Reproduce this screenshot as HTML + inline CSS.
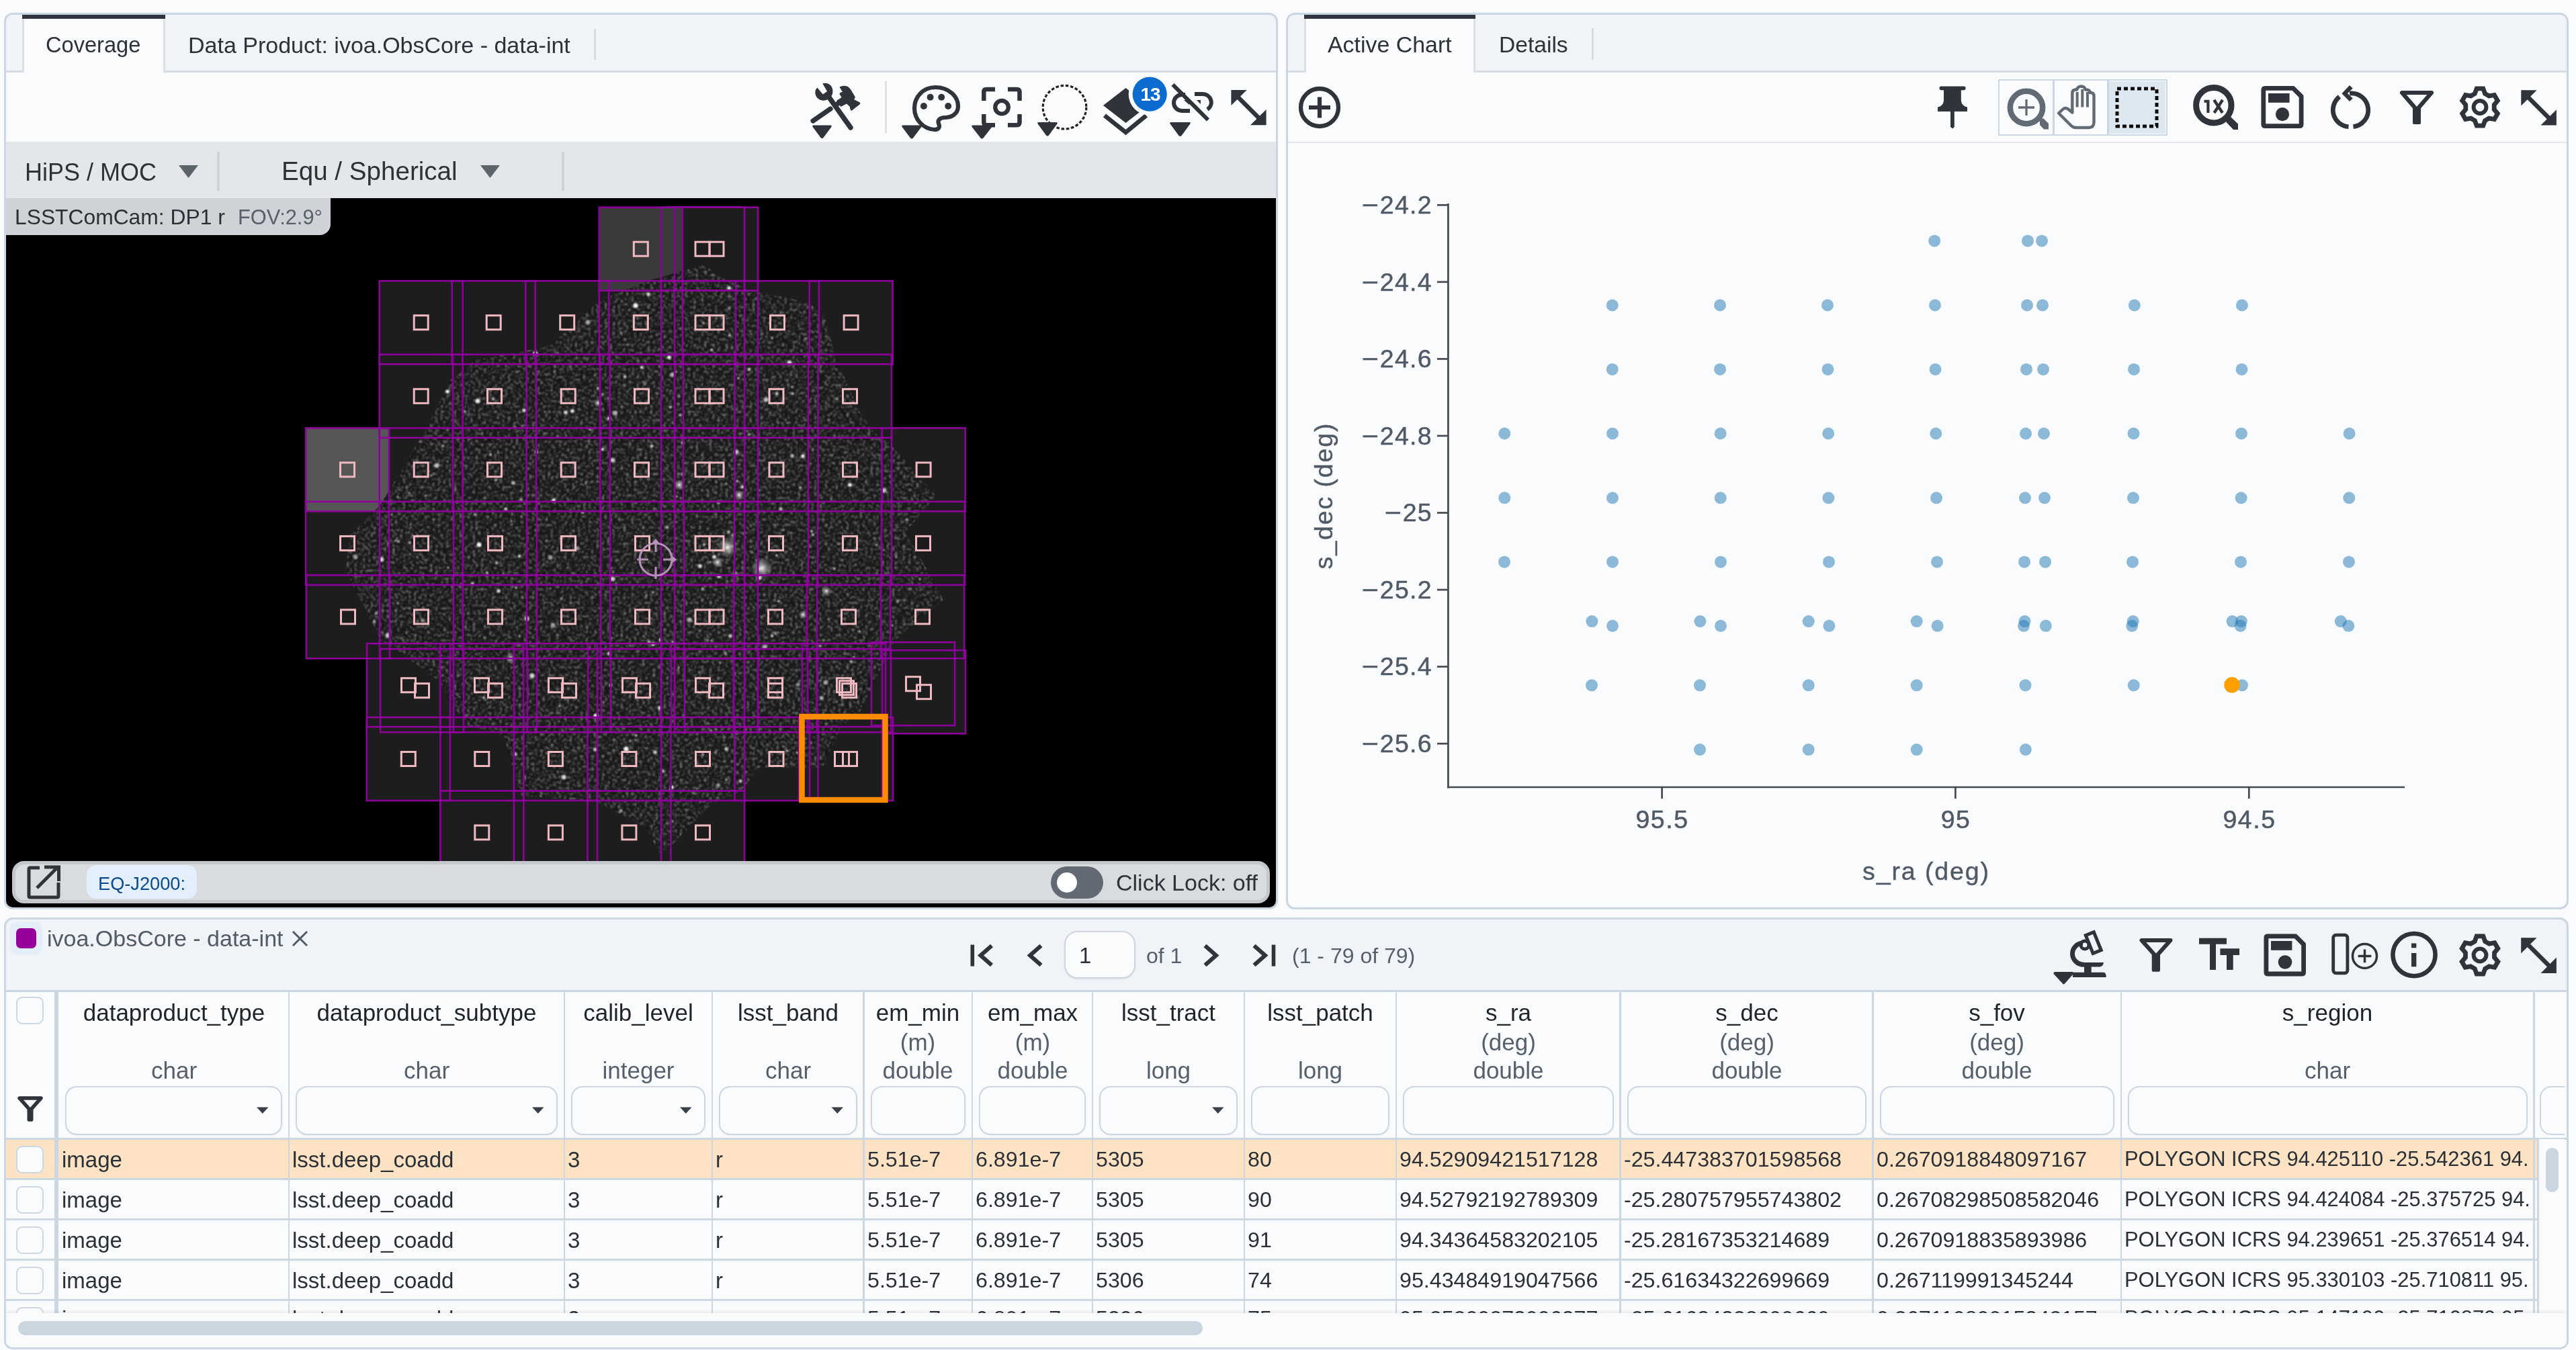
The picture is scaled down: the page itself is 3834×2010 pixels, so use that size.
<!DOCTYPE html>
<html><head><meta charset="utf-8"><style>
html,body{margin:0;padding:0;}
body{width:3834px;height:2010px;position:relative;overflow:hidden;background:#fafbfd;font-family:"Liberation Sans",sans-serif;color:#2d3238;}
.a{position:absolute;box-sizing:border-box;}
.t{position:absolute;white-space:nowrap;line-height:1;will-change:transform;}
.clip{position:absolute;overflow:hidden;}
svg{position:absolute;overflow:visible;}
</style></head><body>
<div class="a" style="left:6px;top:19px;width:1896px;height:1335px;border:3px solid #cbd6e0;border-radius:13px;background:#fafbfd;overflow:hidden;"><div class="a" style="left:0px;top:0px;width:1890px;height:83px;background:#f0f3f7;"></div><div class="a" style="left:0px;top:83px;width:1890px;height:3px;background:#d6dde4;"></div><div class="a" style="left:24px;top:0px;width:213px;height:86px;background:#fafbfd;border-left:3px solid #dcdfe3;border-right:3px solid #dcdfe3;"></div><div class="a" style="left:24px;top:0px;width:213px;height:6px;background:#30353d;"></div><div class="a" style="left:875px;top:21px;width:3px;height:46px;background:#d5dbe1;"></div><div class="a" style="left:0px;top:86px;width:1890px;height:103px;background:#fafbfd;"></div><div class="a" style="left:0px;top:189px;width:1890px;height:85px;background:#e3e6ea;"></div><div class="a" style="left:314px;top:204px;width:4px;height:58px;background:#cfd3d8;"></div><div class="a" style="left:827px;top:204px;width:4px;height:58px;background:#cfd3d8;"></div><div class="a" style="left:1308px;top:99px;width:3px;height:77px;background:#dfe3e7;"></div><div class="a" style="left:0px;top:273px;width:1890px;height:1065px;background:#000;"></div></div><div class="t" style="left:68.0px;top:50.9px;font-size:32.6px;color:#2d3238;">Coverage</div><div class="t" style="left:280.0px;top:49.7px;font-size:34.0px;color:#2d3238;">Data Product: ivoa.ObsCore - data-int</div><div class="t" style="left:37.0px;top:238.5px;font-size:36px;color:#2d3238;">HiPS / MOC</div><div class="t" style="left:419.0px;top:236.3px;font-size:38.6px;color:#2d3238;">Equ / Spherical</div><svg style="left:0;top:0" width="1" height="1"><path d="M266 246 L295 246 L280.5 265 Z" fill="#5b636b"/><path d="M715 246 L744 246 L729.5 265 Z" fill="#5b636b"/></svg><svg style="left:0;top:0" width="3834" height="300" viewBox="0 0 3834 300"><defs><filter id="blL"><feGaussianBlur stdDeviation="0.45"/></filter></defs><g fill="#2f343b" stroke="none"><line x1="1210" y1="180" x2="1236" y2="162" stroke="#2f343b" stroke-width="7.2" stroke-linecap="round"/><line x1="1243" y1="157" x2="1252" y2="151" stroke="#2f343b" stroke-width="7.2"/><path d="M1249.5 129.4 Q1255 126.5 1261 128.5 Q1264 130 1266 133 L1272.3 143.5 Q1273.5 146 1271 148 L1279.8 152.5 Q1281 154 1279.5 155.5 L1268 164.5 Q1266.5 165 1265.8 163.5 L1264.5 158.5 L1260 154.5 L1251.5 159 L1245 150 L1252.5 145 L1249.5 140 Q1250.5 136.5 1254 137 Z"/><path d="M1216.4 130.5 L1224.8 140.6 L1231 136 L1224.3 124.3 Q1232 122.5 1237 128 Q1241 134 1238.5 141 L1237.5 143 L1232 148 Q1226 151 1220 148.5 Q1212 144 1213.5 135 Q1214.5 132 1216.4 130.5 Z"/><line x1="1234" y1="145" x2="1266" y2="190" stroke="#2f343b" stroke-width="7.4" stroke-linecap="round"/></g><path d="M1211 186.5 L1236 186.5 Q1239 186.5 1237 189.5 L1225.5 205 Q1223.5 207 1221.5 205 L1210 189.5 Q1208 186.5 1211 186.5 Z" fill="#2f343b"/><path d="M1392 130 C1413 130 1426 144 1426 158 C1426 170 1416 175 1406 175 C1399 175 1395 179 1397 184 C1400 190 1396 193 1391 193 C1374 192 1361 178 1361 161 C1361 144 1374 130 1392 130 Z" fill="none" stroke="#2f343b" stroke-width="6.2" stroke-linejoin="round"/><circle cx="1384.6" cy="144.8" r="5" fill="#2f343b"/><circle cx="1401.2" cy="144.8" r="5" fill="#2f343b"/><circle cx="1374.9" cy="158" r="5" fill="#2f343b"/><circle cx="1411.2" cy="158" r="5" fill="#2f343b"/><path d="M1344 186.5 L1370 186.5 Q1373 186.5 1371 189.5 L1359.0 205.5 Q1357.0 207.5 1355.0 205.5 L1343 189.5 Q1341 186.5 1344 186.5 Z" fill="#2f343b"/><path d="M1481 133 L1468 133 Q1464.3 133 1464.3 137 L1464.3 150 M1500 133 L1513 133 Q1517.5 133 1517.5 137 L1517.5 150 M1517.5 170 L1517.5 182 Q1517.5 186.2 1513 186.2 L1500 186.2 M1481 186.2 L1468 186.2 Q1464.3 186.2 1464.3 182 L1464.3 170" fill="none" stroke="#2f343b" stroke-width="6.5"/><circle cx="1491" cy="159.7" r="9.8" fill="none" stroke="#2f343b" stroke-width="6.2"/><path d="M1448 186.5 L1475 186.5 Q1478 186.5 1476 189.5 L1463.5 205.5 Q1461.5 207.5 1459.5 205.5 L1447 189.5 Q1445 186.5 1448 186.5 Z" fill="#2f343b"/><circle cx="1584.5" cy="159.7" r="32.3" fill="none" stroke="#222" stroke-width="3.2" stroke-dasharray="4.5 2.8" filter="url(#blL)"/><path d="M1546 182 L1572 182 Q1575 182 1573 185 L1561.0 201.5 Q1559.0 203.5 1557.0 201.5 L1545 185 Q1543 182 1546 182 Z" fill="#2f343b"/><path d="M1642 157 L1675.5 131 L1709 157 L1675.5 183 Z" fill="#2f343b"/><path d="M1644 172 L1675.5 197 L1706 172" fill="none" stroke="#2f343b" stroke-width="6.5"/><circle cx="1711.2" cy="140.2" r="31.5" fill="#fafbfd"/><circle cx="1711.2" cy="140.2" r="25.6" fill="#0b6bcf"/><path d="M1771 165 L1759 165 A12 12 0 0 1 1759 141 L1764 141" fill="none" stroke="#2f343b" stroke-width="6"/><path d="M1778 140 L1790 140 A12.5 12.5 0 0 1 1797 163" fill="none" stroke="#2f343b" stroke-width="6"/><line x1="1745.5" y1="126" x2="1798" y2="178.5" stroke="#2f343b" stroke-width="6"/><path d="M1762 149 L1770 149 L1770 156 Z M1781 149 L1787 149 L1787 155 Z" fill="#2f343b"/><path d="M1743 182 L1770 182 Q1773 182 1771 185 L1758.5 202 Q1756.5 204 1754.5 202 L1742 185 Q1740 182 1743 182 Z" fill="#2f343b"/><line x1="1840" y1="142" x2="1877" y2="179" stroke="#2f343b" stroke-width="6.5"/><path d="M1832.4 134 L1855.7 134 L1832.4 157 Z M1884.6 186.3 L1861 186.3 L1884.6 163 Z" fill="#2f343b"/></svg><div class="t" style="left:-288.5px;width:4000px;text-align:center;top:126.8px;font-size:28px;color:#fff;font-weight:bold;letter-spacing:-1px;">13</div><div class="clip" style="left:9px;top:295px;width:1890px;height:1055px;border-radius:0 0 10px 10px;"><svg style="left:-9px;top:-295px" width="3834" height="2010" viewBox="0 0 3834 2010"><defs><clipPath id="blobclip"><polygon points="1049,394 1071,412 1116,432 1203,450 1228,473 1243,529 1256,560 1281,616 1305,648 1324,660 1349,688 1393,738 1368,769 1347,792 1378,845 1404,893 1331,955 1280,1060 1252,1082 1224,1144 1130,1143 1102,1179 1059,1197 984,1275 962,1233 888,1193 774,1185 750,1095 693,1079 652,1013 587,965 566,953 536,893 514,849 521,797 566,752 588,715 633,640 670,566 707,536 789,521 819,514 893,447 968,417"/></clipPath><filter id="nz" x="0" y="0" width="100%" height="100%"><feTurbulence type="fractalNoise" baseFrequency="0.25" numOctaves="2" seed="4" result="t"/><feColorMatrix in="t" type="matrix" values="0 0 0 0 1  0 0 0 0 1  0 0 0 0 1  0 0 0 2.6 -1.25" result="c"/><feGaussianBlur in="c" stdDeviation="1.0"/></filter><filter id="bl"><feGaussianBlur stdDeviation="1.2"/></filter><radialGradient id="glow"><stop offset="0" stop-color="#fff" stop-opacity="0.95"/><stop offset="0.35" stop-color="#ddd" stop-opacity="0.55"/><stop offset="1" stop-color="#999" stop-opacity="0"/></radialGradient><filter id="bl2"><feGaussianBlur stdDeviation="0.6"/></filter></defs><rect x="891.8" y="308.7" width="124" height="124" fill="#1d1d1d"/><rect x="984.0" y="308.7" width="124" height="124" fill="#1d1d1d"/><rect x="1004.0" y="308.7" width="124" height="124" fill="#1d1d1d"/><rect x="564.7" y="418.2" width="124" height="124" fill="#1d1d1d"/><rect x="672.7" y="418.2" width="124" height="124" fill="#1d1d1d"/><rect x="782.2" y="418.2" width="124" height="124" fill="#1d1d1d"/><rect x="891.8" y="418.2" width="124" height="124" fill="#1d1d1d"/><rect x="984.0" y="418.2" width="124" height="124" fill="#1d1d1d"/><rect x="1004.0" y="418.2" width="124" height="124" fill="#1d1d1d"/><rect x="1095.0" y="418.2" width="124" height="124" fill="#1d1d1d"/><rect x="1204.6" y="418.2" width="124" height="124" fill="#1d1d1d"/><rect x="564.7" y="527.8" width="124" height="124" fill="#1d1d1d"/><rect x="674.0" y="527.8" width="124" height="124" fill="#1d1d1d"/><rect x="783.7" y="527.8" width="124" height="124" fill="#1d1d1d"/><rect x="893.0" y="527.8" width="124" height="124" fill="#1d1d1d"/><rect x="984.0" y="527.8" width="124" height="124" fill="#1d1d1d"/><rect x="1004.0" y="527.8" width="124" height="124" fill="#1d1d1d"/><rect x="1093.5" y="527.8" width="124" height="124" fill="#1d1d1d"/><rect x="1203.0" y="527.8" width="124" height="124" fill="#1d1d1d"/><rect x="455.0" y="637.3" width="124" height="124" fill="#1d1d1d"/><rect x="564.7" y="637.3" width="124" height="124" fill="#1d1d1d"/><rect x="674.0" y="637.3" width="124" height="124" fill="#1d1d1d"/><rect x="783.7" y="637.3" width="124" height="124" fill="#1d1d1d"/><rect x="893.0" y="637.3" width="124" height="124" fill="#1d1d1d"/><rect x="984.0" y="637.3" width="124" height="124" fill="#1d1d1d"/><rect x="1004.0" y="637.3" width="124" height="124" fill="#1d1d1d"/><rect x="1093.5" y="637.3" width="124" height="124" fill="#1d1d1d"/><rect x="1203.0" y="637.3" width="124" height="124" fill="#1d1d1d"/><rect x="1312.6" y="637.3" width="124" height="124" fill="#1d1d1d"/><rect x="455.0" y="746.9" width="124" height="124" fill="#1d1d1d"/><rect x="565.0" y="746.9" width="124" height="124" fill="#1d1d1d"/><rect x="675.0" y="746.9" width="124" height="124" fill="#1d1d1d"/><rect x="784.0" y="746.9" width="124" height="124" fill="#1d1d1d"/><rect x="894.0" y="746.9" width="124" height="124" fill="#1d1d1d"/><rect x="984.0" y="746.9" width="124" height="124" fill="#1d1d1d"/><rect x="1004.0" y="746.9" width="124" height="124" fill="#1d1d1d"/><rect x="1093.0" y="746.9" width="124" height="124" fill="#1d1d1d"/><rect x="1203.0" y="746.9" width="124" height="124" fill="#1d1d1d"/><rect x="1312.0" y="746.9" width="124" height="124" fill="#1d1d1d"/><rect x="456.0" y="856.4" width="124" height="124" fill="#1d1d1d"/><rect x="565.0" y="856.4" width="124" height="124" fill="#1d1d1d"/><rect x="675.0" y="856.4" width="124" height="124" fill="#1d1d1d"/><rect x="784.0" y="856.4" width="124" height="124" fill="#1d1d1d"/><rect x="894.0" y="856.4" width="124" height="124" fill="#1d1d1d"/><rect x="984.0" y="856.4" width="124" height="124" fill="#1d1d1d"/><rect x="1004.0" y="856.4" width="124" height="124" fill="#1d1d1d"/><rect x="1092.0" y="856.4" width="124" height="124" fill="#1d1d1d"/><rect x="1201.0" y="856.4" width="124" height="124" fill="#1d1d1d"/><rect x="1311.0" y="856.4" width="124" height="124" fill="#1d1d1d"/><rect x="546.0" y="958.2" width="124" height="124" fill="#1d1d1d"/><rect x="566.0" y="966.2" width="124" height="124" fill="#1d1d1d"/><rect x="655.0" y="958.2" width="124" height="124" fill="#1d1d1d"/><rect x="675.0" y="966.2" width="124" height="124" fill="#1d1d1d"/><rect x="765.0" y="958.2" width="124" height="124" fill="#1d1d1d"/><rect x="785.0" y="966.2" width="124" height="124" fill="#1d1d1d"/><rect x="875.0" y="958.2" width="124" height="124" fill="#1d1d1d"/><rect x="895.0" y="966.2" width="124" height="124" fill="#1d1d1d"/><rect x="984.0" y="958.2" width="124" height="124" fill="#1d1d1d"/><rect x="1004.0" y="966.2" width="124" height="124" fill="#1d1d1d"/><rect x="984.0" y="966.2" width="124" height="124" fill="#1d1d1d"/><rect x="1004.0" y="958.2" width="124" height="124" fill="#1d1d1d"/><rect x="1092.0" y="958.2" width="124" height="124" fill="#1d1d1d"/><rect x="1092.0" y="966.2" width="124" height="124" fill="#1d1d1d"/><rect x="1194.0" y="958.2" width="124" height="124" fill="#1d1d1d"/><rect x="1202.0" y="966.2" width="124" height="124" fill="#1d1d1d"/><rect x="1297.0" y="956.2" width="124" height="124" fill="#1d1d1d"/><rect x="1313.0" y="968.2" width="124" height="124" fill="#1d1d1d"/><rect x="545.8" y="1068.0" width="124" height="124" fill="#1d1d1d"/><rect x="655.3" y="1068.0" width="124" height="124" fill="#1d1d1d"/><rect x="764.9" y="1068.0" width="124" height="124" fill="#1d1d1d"/><rect x="874.4" y="1068.0" width="124" height="124" fill="#1d1d1d"/><rect x="984.0" y="1068.0" width="124" height="124" fill="#1d1d1d"/><rect x="1093.5" y="1068.0" width="124" height="124" fill="#1d1d1d"/><rect x="1189.0" y="1068.0" width="124" height="124" fill="#1d1d1d"/><rect x="1205.0" y="1068.0" width="124" height="124" fill="#1d1d1d"/><rect x="655.3" y="1177.5" width="124" height="124" fill="#1d1d1d"/><rect x="764.9" y="1177.5" width="124" height="124" fill="#1d1d1d"/><rect x="874.4" y="1177.5" width="124" height="124" fill="#1d1d1d"/><rect x="984.0" y="1177.5" width="124" height="124" fill="#1d1d1d"/><rect x="891" y="308.7" width="124" height="124" fill="#3a3a3a"/><rect x="455" y="637" width="124" height="124" fill="#565656"/><g clip-path="url(#blobclip)"><rect x="500" y="380" width="920" height="900" fill="#171717"/><rect x="500" y="380" width="920" height="900" filter="url(#nz)" opacity="0.55"/><g filter="url(#bl)"><circle cx="795" cy="524" r="1.0" fill="#fff" opacity="0.54"/><circle cx="988" cy="714" r="1.0" fill="#fff" opacity="0.95"/><circle cx="695" cy="466" r="2.8" fill="#fff" opacity="0.53"/><circle cx="583" cy="766" r="1.2" fill="#fff" opacity="0.97"/><circle cx="1074" cy="906" r="1.0" fill="#fff" opacity="0.79"/><circle cx="861" cy="1254" r="1.0" fill="#fff" opacity="0.78"/><circle cx="621" cy="761" r="1.2" fill="#fff" opacity="0.79"/><circle cx="1010" cy="994" r="1.2" fill="#fff" opacity="0.79"/><circle cx="1081" cy="720" r="1.2" fill="#fff" opacity="0.78"/><circle cx="1063" cy="829" r="2.8" fill="#fff" opacity="0.89"/><circle cx="924" cy="1207" r="2.2" fill="#fff" opacity="0.65"/><circle cx="1223" cy="1009" r="1.5" fill="#fff" opacity="0.54"/><circle cx="773" cy="828" r="2.2" fill="#fff" opacity="0.86"/><circle cx="762" cy="1257" r="1.2" fill="#fff" opacity="0.76"/><circle cx="650" cy="693" r="3.5" fill="#fff" opacity="0.71"/><circle cx="1375" cy="459" r="2.2" fill="#fff" opacity="0.67"/><circle cx="819" cy="830" r="3.5" fill="#fff" opacity="0.53"/><circle cx="585" cy="629" r="1.2" fill="#fff" opacity="0.53"/><circle cx="1138" cy="963" r="3.5" fill="#fff" opacity="0.64"/><circle cx="851" cy="982" r="1.0" fill="#fff" opacity="0.97"/><circle cx="823" cy="931" r="3.5" fill="#fff" opacity="0.53"/><circle cx="1199" cy="504" r="1.5" fill="#fff" opacity="0.70"/><circle cx="1334" cy="829" r="1.5" fill="#fff" opacity="0.72"/><circle cx="1000" cy="1172" r="2.8" fill="#fff" opacity="0.93"/><circle cx="753" cy="758" r="2.2" fill="#fff" opacity="0.84"/><circle cx="846" cy="594" r="1.2" fill="#fff" opacity="0.59"/><circle cx="711" cy="597" r="3.5" fill="#fff" opacity="0.92"/><circle cx="666" cy="640" r="1.5" fill="#fff" opacity="0.71"/><circle cx="836" cy="891" r="1.5" fill="#fff" opacity="0.85"/><circle cx="969" cy="937" r="1.0" fill="#fff" opacity="0.73"/><circle cx="1293" cy="1232" r="2.8" fill="#fff" opacity="0.70"/><circle cx="859" cy="816" r="2.8" fill="#fff" opacity="0.53"/><circle cx="561" cy="575" r="1.5" fill="#fff" opacity="0.55"/><circle cx="1047" cy="481" r="1.5" fill="#fff" opacity="0.77"/><circle cx="1364" cy="933" r="1.2" fill="#fff" opacity="0.94"/><circle cx="1059" cy="521" r="1.8" fill="#fff" opacity="0.98"/><circle cx="1048" cy="810" r="1.2" fill="#fff" opacity="0.92"/><circle cx="1404" cy="802" r="3.5" fill="#fff" opacity="0.66"/><circle cx="631" cy="1053" r="1.8" fill="#fff" opacity="0.74"/><circle cx="1130" cy="847" r="1.5" fill="#fff" opacity="0.98"/><circle cx="981" cy="520" r="1.0" fill="#fff" opacity="0.88"/><circle cx="771" cy="959" r="1.2" fill="#fff" opacity="0.85"/><circle cx="738" cy="715" r="1.5" fill="#fff" opacity="0.68"/><circle cx="703" cy="869" r="2.2" fill="#fff" opacity="0.82"/><circle cx="1058" cy="1088" r="1.5" fill="#fff" opacity="0.90"/><circle cx="1245" cy="1045" r="1.5" fill="#fff" opacity="0.60"/><circle cx="948" cy="1037" r="1.0" fill="#fff" opacity="0.90"/><circle cx="930" cy="561" r="2.2" fill="#fff" opacity="0.72"/><circle cx="1353" cy="1264" r="2.2" fill="#fff" opacity="0.54"/><circle cx="593" cy="806" r="2.2" fill="#fff" opacity="0.60"/><circle cx="1068" cy="1187" r="1.0" fill="#fff" opacity="0.74"/><circle cx="1094" cy="1098" r="1.2" fill="#fff" opacity="0.92"/><circle cx="609" cy="734" r="1.5" fill="#fff" opacity="0.74"/><circle cx="662" cy="1088" r="2.2" fill="#fff" opacity="0.54"/><circle cx="1361" cy="1029" r="3.5" fill="#fff" opacity="0.70"/><circle cx="1362" cy="1031" r="1.5" fill="#fff" opacity="1.00"/><circle cx="525" cy="913" r="3.5" fill="#fff" opacity="0.90"/><circle cx="633" cy="1121" r="3.5" fill="#fff" opacity="0.83"/><circle cx="819" cy="876" r="1.5" fill="#fff" opacity="0.51"/><circle cx="1227" cy="1033" r="1.2" fill="#fff" opacity="0.76"/><circle cx="1350" cy="774" r="1.5" fill="#fff" opacity="0.91"/><circle cx="692" cy="613" r="1.8" fill="#fff" opacity="0.75"/><circle cx="1195" cy="679" r="2.8" fill="#fff" opacity="0.92"/><circle cx="555" cy="1045" r="3.5" fill="#fff" opacity="0.83"/><circle cx="1242" cy="847" r="1.5" fill="#fff" opacity="0.77"/><circle cx="976" cy="407" r="3.5" fill="#fff" opacity="0.89"/><circle cx="1054" cy="1077" r="1.5" fill="#fff" opacity="0.59"/><circle cx="931" cy="1032" r="1.0" fill="#fff" opacity="0.66"/><circle cx="972" cy="882" r="1.2" fill="#fff" opacity="0.94"/><circle cx="552" cy="559" r="1.0" fill="#fff" opacity="0.89"/><circle cx="962" cy="887" r="1.2" fill="#fff" opacity="0.72"/><circle cx="1057" cy="837" r="1.5" fill="#fff" opacity="0.85"/><circle cx="912" cy="862" r="3.5" fill="#fff" opacity="0.75"/><circle cx="725" cy="853" r="1.8" fill="#fff" opacity="0.96"/><circle cx="1312" cy="569" r="3.5" fill="#fff" opacity="0.57"/><circle cx="611" cy="781" r="1.2" fill="#fff" opacity="0.84"/><circle cx="890" cy="578" r="1.8" fill="#fff" opacity="0.89"/><circle cx="1316" cy="527" r="2.2" fill="#fff" opacity="0.57"/><circle cx="1303" cy="1246" r="1.5" fill="#fff" opacity="0.87"/><circle cx="586" cy="1173" r="1.5" fill="#fff" opacity="0.99"/><circle cx="1258" cy="533" r="2.8" fill="#fff" opacity="1.00"/><circle cx="867" cy="763" r="2.2" fill="#fff" opacity="0.66"/><circle cx="1157" cy="407" r="3.5" fill="#fff" opacity="0.72"/><circle cx="516" cy="683" r="1.8" fill="#fff" opacity="0.76"/><circle cx="559" cy="1262" r="1.5" fill="#fff" opacity="0.99"/><circle cx="595" cy="625" r="1.0" fill="#fff" opacity="0.95"/><circle cx="665" cy="1059" r="2.8" fill="#fff" opacity="0.92"/><circle cx="1115" cy="1227" r="2.8" fill="#fff" opacity="0.57"/><circle cx="1336" cy="895" r="2.2" fill="#fff" opacity="0.54"/><circle cx="552" cy="999" r="2.8" fill="#fff" opacity="0.95"/><circle cx="745" cy="405" r="1.2" fill="#fff" opacity="0.90"/><circle cx="576" cy="1148" r="1.2" fill="#fff" opacity="0.63"/><circle cx="611" cy="400" r="2.8" fill="#fff" opacity="0.96"/><circle cx="744" cy="504" r="1.5" fill="#fff" opacity="0.97"/><circle cx="1382" cy="622" r="1.5" fill="#fff" opacity="0.60"/><circle cx="784" cy="660" r="1.5" fill="#fff" opacity="0.64"/><circle cx="955" cy="547" r="2.2" fill="#fff" opacity="0.90"/><circle cx="1405" cy="423" r="1.0" fill="#fff" opacity="0.87"/><circle cx="1001" cy="558" r="3.5" fill="#fff" opacity="0.62"/><circle cx="907" cy="973" r="2.8" fill="#fff" opacity="0.83"/><circle cx="997" cy="1177" r="1.8" fill="#fff" opacity="0.84"/><circle cx="1394" cy="693" r="1.5" fill="#fff" opacity="0.70"/><circle cx="816" cy="438" r="1.5" fill="#fff" opacity="0.51"/><circle cx="1069" cy="1169" r="2.8" fill="#fff" opacity="0.58"/><circle cx="577" cy="1135" r="1.8" fill="#fff" opacity="0.80"/><circle cx="1130" cy="430" r="1.5" fill="#fff" opacity="0.58"/><circle cx="906" cy="623" r="2.2" fill="#fff" opacity="0.99"/><circle cx="998" cy="606" r="1.8" fill="#fff" opacity="0.61"/><circle cx="666" cy="687" r="1.2" fill="#fff" opacity="0.74"/><circle cx="958" cy="568" r="1.0" fill="#fff" opacity="0.55"/><circle cx="1244" cy="517" r="1.0" fill="#fff" opacity="0.70"/><circle cx="773" cy="947" r="1.2" fill="#fff" opacity="0.79"/><circle cx="982" cy="1054" r="2.8" fill="#fff" opacity="0.88"/><circle cx="1156" cy="827" r="1.8" fill="#fff" opacity="0.86"/><circle cx="1085" cy="429" r="2.8" fill="#fff" opacity="0.87"/><circle cx="1239" cy="513" r="1.0" fill="#fff" opacity="0.91"/><circle cx="1031" cy="1180" r="1.5" fill="#fff" opacity="0.54"/><circle cx="538" cy="954" r="1.2" fill="#fff" opacity="0.69"/><circle cx="911" cy="435" r="1.0" fill="#fff" opacity="0.81"/><circle cx="1119" cy="823" r="1.0" fill="#fff" opacity="0.73"/><circle cx="564" cy="1215" r="1.2" fill="#fff" opacity="0.83"/><circle cx="560" cy="1042" r="1.8" fill="#fff" opacity="0.90"/><circle cx="1270" cy="598" r="1.5" fill="#fff" opacity="0.62"/><circle cx="1091" cy="797" r="2.8" fill="#fff" opacity="0.54"/><circle cx="1329" cy="644" r="1.0" fill="#fff" opacity="0.81"/><circle cx="1085" cy="459" r="1.5" fill="#fff" opacity="0.67"/><circle cx="1093" cy="1003" r="1.5" fill="#fff" opacity="0.51"/><circle cx="555" cy="628" r="1.2" fill="#fff" opacity="0.85"/><circle cx="1115" cy="647" r="1.8" fill="#fff" opacity="0.73"/><circle cx="924" cy="495" r="1.5" fill="#fff" opacity="0.66"/><circle cx="578" cy="809" r="1.8" fill="#fff" opacity="0.73"/><circle cx="1246" cy="1247" r="3.5" fill="#fff" opacity="1.00"/><circle cx="852" cy="1201" r="1.5" fill="#fff" opacity="0.54"/><circle cx="582" cy="1052" r="1.8" fill="#fff" opacity="0.98"/><circle cx="621" cy="1116" r="1.8" fill="#fff" opacity="0.94"/><circle cx="1140" cy="595" r="3.5" fill="#fff" opacity="0.70"/><circle cx="645" cy="1231" r="3.5" fill="#fff" opacity="0.70"/><circle cx="1162" cy="758" r="2.8" fill="#fff" opacity="0.66"/><circle cx="1265" cy="392" r="2.2" fill="#fff" opacity="0.92"/><circle cx="609" cy="1210" r="1.0" fill="#fff" opacity="0.95"/><circle cx="764" cy="719" r="2.8" fill="#fff" opacity="0.70"/><circle cx="1292" cy="458" r="2.8" fill="#fff" opacity="0.88"/><circle cx="1277" cy="638" r="1.0" fill="#fff" opacity="0.92"/><circle cx="760" cy="1218" r="1.5" fill="#fff" opacity="0.99"/><circle cx="897" cy="669" r="2.2" fill="#fff" opacity="0.89"/><circle cx="889" cy="416" r="2.8" fill="#fff" opacity="0.96"/><circle cx="1356" cy="876" r="1.2" fill="#fff" opacity="0.52"/><circle cx="1166" cy="789" r="1.5" fill="#fff" opacity="0.82"/><circle cx="760" cy="433" r="1.5" fill="#fff" opacity="0.59"/><circle cx="878" cy="639" r="1.8" fill="#fff" opacity="0.87"/><circle cx="1388" cy="620" r="1.5" fill="#fff" opacity="0.65"/><circle cx="1007" cy="739" r="1.5" fill="#fff" opacity="0.82"/><circle cx="568" cy="833" r="3.5" fill="#fff" opacity="0.78"/><circle cx="912" cy="685" r="3.5" fill="#fff" opacity="0.71"/><circle cx="998" cy="606" r="1.5" fill="#fff" opacity="0.67"/><circle cx="583" cy="602" r="1.8" fill="#fff" opacity="0.90"/><circle cx="684" cy="408" r="2.8" fill="#fff" opacity="0.69"/><circle cx="1179" cy="576" r="1.8" fill="#fff" opacity="0.67"/><circle cx="556" cy="636" r="2.2" fill="#fff" opacity="0.56"/><circle cx="958" cy="947" r="1.5" fill="#fff" opacity="0.55"/><circle cx="1316" cy="730" r="3.5" fill="#fff" opacity="0.72"/><circle cx="784" cy="1111" r="1.0" fill="#fff" opacity="0.56"/><circle cx="887" cy="1066" r="3.5" fill="#fff" opacity="0.98"/><circle cx="946" cy="455" r="3.5" fill="#fff" opacity="0.99"/><circle cx="726" cy="487" r="1.5" fill="#fff" opacity="0.58"/><circle cx="1384" cy="486" r="3.5" fill="#fff" opacity="0.54"/><circle cx="1207" cy="391" r="1.5" fill="#fff" opacity="0.62"/><circle cx="1337" cy="961" r="1.8" fill="#fff" opacity="0.98"/><circle cx="1070" cy="858" r="2.8" fill="#fff" opacity="0.85"/><circle cx="602" cy="452" r="1.5" fill="#fff" opacity="0.69"/><circle cx="703" cy="922" r="1.0" fill="#fff" opacity="0.77"/><circle cx="1407" cy="637" r="2.2" fill="#fff" opacity="0.82"/><circle cx="1304" cy="811" r="1.5" fill="#fff" opacity="0.77"/><circle cx="527" cy="754" r="1.8" fill="#fff" opacity="0.53"/><circle cx="677" cy="1173" r="2.8" fill="#fff" opacity="0.54"/><circle cx="707" cy="766" r="2.2" fill="#fff" opacity="0.61"/><circle cx="531" cy="689" r="2.8" fill="#fff" opacity="0.68"/><circle cx="861" cy="396" r="1.8" fill="#fff" opacity="0.87"/><circle cx="959" cy="572" r="1.5" fill="#fff" opacity="0.66"/><circle cx="1246" cy="594" r="1.5" fill="#fff" opacity="0.63"/><circle cx="1309" cy="486" r="3.5" fill="#fff" opacity="0.81"/><circle cx="1316" cy="819" r="1.0" fill="#fff" opacity="0.97"/><circle cx="633" cy="738" r="1.5" fill="#fff" opacity="0.51"/><circle cx="1042" cy="758" r="1.0" fill="#fff" opacity="0.59"/><circle cx="909" cy="1020" r="2.2" fill="#fff" opacity="0.87"/><circle cx="1408" cy="1214" r="2.2" fill="#fff" opacity="0.60"/><circle cx="1094" cy="854" r="3.5" fill="#fff" opacity="0.52"/><circle cx="1105" cy="725" r="2.2" fill="#fff" opacity="0.99"/><circle cx="903" cy="486" r="1.2" fill="#fff" opacity="0.64"/><circle cx="820" cy="1236" r="1.2" fill="#fff" opacity="0.78"/><circle cx="1191" cy="726" r="1.8" fill="#fff" opacity="0.91"/><circle cx="894" cy="434" r="3.5" fill="#fff" opacity="0.60"/><circle cx="993" cy="785" r="2.2" fill="#fff" opacity="0.68"/><circle cx="1316" cy="417" r="2.8" fill="#fff" opacity="0.62"/><circle cx="1069" cy="748" r="2.8" fill="#fff" opacity="0.52"/><circle cx="557" cy="1204" r="1.8" fill="#fff" opacity="0.60"/><circle cx="557" cy="926" r="2.2" fill="#fff" opacity="0.64"/><circle cx="1371" cy="936" r="1.8" fill="#fff" opacity="0.87"/><circle cx="1128" cy="1208" r="1.8" fill="#fff" opacity="0.50"/><circle cx="1188" cy="1201" r="1.2" fill="#fff" opacity="0.51"/><circle cx="713" cy="811" r="3.5" fill="#fff" opacity="0.98"/><circle cx="852" cy="612" r="2.8" fill="#fff" opacity="0.91"/><circle cx="621" cy="829" r="1.0" fill="#fff" opacity="0.90"/><circle cx="1172" cy="1118" r="1.5" fill="#fff" opacity="0.80"/><circle cx="798" cy="673" r="2.2" fill="#fff" opacity="0.89"/><circle cx="1042" cy="843" r="2.8" fill="#fff" opacity="0.88"/><circle cx="725" cy="447" r="1.0" fill="#fff" opacity="0.74"/><circle cx="996" cy="532" r="2.8" fill="#fff" opacity="0.94"/><circle cx="1399" cy="624" r="1.2" fill="#fff" opacity="0.60"/><circle cx="883" cy="1265" r="3.5" fill="#fff" opacity="0.59"/><circle cx="621" cy="798" r="1.5" fill="#fff" opacity="0.87"/><circle cx="1271" cy="978" r="1.2" fill="#fff" opacity="0.89"/><circle cx="767" cy="637" r="1.8" fill="#fff" opacity="0.69"/><circle cx="1172" cy="566" r="1.5" fill="#fff" opacity="0.59"/><circle cx="714" cy="639" r="1.5" fill="#fff" opacity="0.66"/><circle cx="860" cy="1268" r="1.5" fill="#fff" opacity="0.82"/><circle cx="591" cy="801" r="1.0" fill="#fff" opacity="0.55"/><circle cx="932" cy="1115" r="3.5" fill="#fff" opacity="0.96"/><circle cx="537" cy="650" r="1.2" fill="#fff" opacity="0.53"/><circle cx="1046" cy="1123" r="1.5" fill="#fff" opacity="0.97"/><circle cx="839" cy="1157" r="3.5" fill="#fff" opacity="0.80"/><circle cx="1205" cy="978" r="1.0" fill="#fff" opacity="0.55"/><circle cx="1042" cy="939" r="1.5" fill="#fff" opacity="0.52"/><circle cx="809" cy="429" r="1.8" fill="#fff" opacity="0.52"/><circle cx="1166" cy="1199" r="1.0" fill="#fff" opacity="0.91"/><circle cx="872" cy="719" r="1.8" fill="#fff" opacity="0.54"/><circle cx="529" cy="829" r="3.5" fill="#fff" opacity="0.53"/><circle cx="592" cy="740" r="1.5" fill="#fff" opacity="0.82"/><circle cx="583" cy="535" r="1.8" fill="#fff" opacity="0.70"/><circle cx="758" cy="662" r="1.0" fill="#fff" opacity="0.66"/><circle cx="1016" cy="706" r="2.8" fill="#fff" opacity="0.51"/><circle cx="1198" cy="1100" r="1.5" fill="#fff" opacity="0.70"/><circle cx="869" cy="1224" r="2.8" fill="#fff" opacity="0.95"/><circle cx="886" cy="1116" r="2.8" fill="#fff" opacity="0.79"/><circle cx="832" cy="1074" r="1.5" fill="#fff" opacity="0.51"/><circle cx="1002" cy="957" r="2.8" fill="#fff" opacity="0.54"/><circle cx="1066" cy="718" r="1.5" fill="#fff" opacity="0.57"/><circle cx="758" cy="851" r="1.2" fill="#fff" opacity="0.55"/><circle cx="946" cy="1102" r="1.5" fill="#fff" opacity="0.65"/><circle cx="1262" cy="428" r="3.5" fill="#fff" opacity="0.66"/><circle cx="1053" cy="953" r="1.2" fill="#fff" opacity="0.95"/><circle cx="1065" cy="1120" r="1.5" fill="#fff" opacity="0.82"/><circle cx="1279" cy="940" r="1.5" fill="#fff" opacity="0.91"/><circle cx="666" cy="583" r="2.8" fill="#fff" opacity="0.97"/><circle cx="642" cy="708" r="1.5" fill="#fff" opacity="0.62"/><circle cx="1160" cy="1184" r="1.0" fill="#fff" opacity="0.94"/><circle cx="1267" cy="985" r="2.2" fill="#fff" opacity="0.56"/><circle cx="1046" cy="877" r="1.8" fill="#fff" opacity="0.82"/><circle cx="780" cy="611" r="2.8" fill="#fff" opacity="0.83"/><circle cx="907" cy="778" r="1.0" fill="#fff" opacity="0.50"/><circle cx="1397" cy="802" r="3.5" fill="#fff" opacity="0.88"/><circle cx="1210" cy="796" r="1.5" fill="#fff" opacity="0.91"/><circle cx="864" cy="449" r="2.2" fill="#fff" opacity="0.72"/><circle cx="583" cy="781" r="1.0" fill="#fff" opacity="0.52"/><circle cx="619" cy="1206" r="2.2" fill="#fff" opacity="0.89"/><circle cx="965" cy="438" r="2.8" fill="#fff" opacity="0.83"/><circle cx="1214" cy="413" r="1.2" fill="#fff" opacity="1.00"/><circle cx="1166" cy="1111" r="1.5" fill="#fff" opacity="0.57"/><circle cx="1306" cy="645" r="1.5" fill="#fff" opacity="0.84"/><circle cx="1156" cy="586" r="2.2" fill="#fff" opacity="0.81"/><circle cx="730" cy="677" r="1.8" fill="#fff" opacity="0.95"/><circle cx="915" cy="615" r="3.5" fill="#fff" opacity="0.60"/><circle cx="739" cy="838" r="2.2" fill="#fff" opacity="0.69"/><circle cx="681" cy="747" r="1.8" fill="#fff" opacity="0.84"/><circle cx="1315" cy="539" r="1.8" fill="#fff" opacity="0.56"/><circle cx="983" cy="953" r="2.2" fill="#fff" opacity="0.98"/><circle cx="912" cy="851" r="1.2" fill="#fff" opacity="0.63"/><circle cx="987" cy="1148" r="2.2" fill="#fff" opacity="0.63"/><circle cx="1401" cy="901" r="2.2" fill="#fff" opacity="0.67"/><circle cx="574" cy="594" r="1.0" fill="#fff" opacity="0.65"/><circle cx="970" cy="664" r="2.2" fill="#fff" opacity="0.87"/><circle cx="1180" cy="586" r="1.8" fill="#fff" opacity="0.81"/><circle cx="893" cy="844" r="1.0" fill="#fff" opacity="0.57"/><circle cx="707" cy="968" r="1.0" fill="#fff" opacity="0.53"/><circle cx="1016" cy="659" r="2.2" fill="#fff" opacity="0.77"/><circle cx="876" cy="657" r="1.5" fill="#fff" opacity="0.60"/><circle cx="1068" cy="810" r="1.5" fill="#fff" opacity="0.51"/><circle cx="1229" cy="1016" r="3.5" fill="#fff" opacity="0.55"/><circle cx="1081" cy="1161" r="1.8" fill="#fff" opacity="0.70"/><circle cx="740" cy="400" r="2.2" fill="#fff" opacity="0.80"/><circle cx="1026" cy="923" r="3.5" fill="#fff" opacity="0.62"/><circle cx="1322" cy="429" r="1.0" fill="#fff" opacity="0.70"/><circle cx="716" cy="442" r="1.2" fill="#fff" opacity="0.51"/><circle cx="1001" cy="1223" r="1.5" fill="#fff" opacity="0.71"/><circle cx="972" cy="959" r="2.8" fill="#fff" opacity="0.91"/><circle cx="659" cy="664" r="1.8" fill="#fff" opacity="0.81"/><circle cx="1405" cy="1031" r="3.5" fill="#fff" opacity="0.86"/><circle cx="506" cy="1137" r="3.5" fill="#fff" opacity="0.54"/><circle cx="1097" cy="545" r="1.2" fill="#fff" opacity="0.63"/><circle cx="1086" cy="499" r="1.8" fill="#fff" opacity="0.86"/><circle cx="742" cy="880" r="2.8" fill="#fff" opacity="0.84"/><circle cx="1335" cy="1250" r="1.8" fill="#fff" opacity="0.82"/><circle cx="1378" cy="582" r="1.0" fill="#fff" opacity="0.58"/><circle cx="1323" cy="1135" r="1.5" fill="#fff" opacity="0.97"/><circle cx="1179" cy="679" r="2.8" fill="#fff" opacity="0.66"/><circle cx="718" cy="1193" r="3.5" fill="#fff" opacity="0.74"/><circle cx="983" cy="396" r="1.0" fill="#fff" opacity="0.72"/><circle cx="1159" cy="895" r="1.8" fill="#fff" opacity="0.89"/><circle cx="856" cy="908" r="1.5" fill="#fff" opacity="0.57"/><circle cx="524" cy="484" r="1.5" fill="#fff" opacity="0.67"/><circle cx="629" cy="415" r="1.0" fill="#fff" opacity="0.57"/><circle cx="1086" cy="428" r="1.2" fill="#fff" opacity="0.87"/><circle cx="560" cy="913" r="2.2" fill="#fff" opacity="0.60"/><circle cx="1369" cy="862" r="1.2" fill="#fff" opacity="0.94"/><circle cx="1188" cy="1019" r="2.8" fill="#fff" opacity="0.55"/><circle cx="687" cy="489" r="1.0" fill="#fff" opacity="0.97"/><circle cx="1329" cy="1057" r="1.2" fill="#fff" opacity="0.91"/><circle cx="1075" cy="644" r="1.2" fill="#fff" opacity="0.57"/><circle cx="1221" cy="962" r="1.8" fill="#fff" opacity="0.66"/><circle cx="886" cy="409" r="1.8" fill="#fff" opacity="0.97"/><circle cx="544" cy="1062" r="2.2" fill="#fff" opacity="0.88"/><circle cx="1048" cy="811" r="1.8" fill="#fff" opacity="0.81"/><circle cx="528" cy="755" r="2.8" fill="#fff" opacity="0.76"/><circle cx="589" cy="805" r="1.0" fill="#fff" opacity="0.77"/><circle cx="697" cy="1153" r="1.2" fill="#fff" opacity="0.79"/><circle cx="761" cy="776" r="1.5" fill="#fff" opacity="0.64"/><circle cx="1183" cy="438" r="2.2" fill="#fff" opacity="0.75"/><circle cx="947" cy="1095" r="1.5" fill="#fff" opacity="0.98"/><circle cx="1039" cy="1237" r="1.8" fill="#fff" opacity="0.79"/><circle cx="645" cy="1111" r="1.5" fill="#fff" opacity="0.75"/><circle cx="600" cy="953" r="1.2" fill="#fff" opacity="0.75"/><circle cx="1402" cy="887" r="1.2" fill="#fff" opacity="0.81"/><circle cx="824" cy="745" r="2.8" fill="#fff" opacity="0.95"/><circle cx="1178" cy="764" r="1.0" fill="#fff" opacity="0.69"/><circle cx="776" cy="769" r="1.5" fill="#fff" opacity="0.69"/><circle cx="1304" cy="597" r="3.5" fill="#fff" opacity="0.56"/><circle cx="1041" cy="1000" r="1.0" fill="#fff" opacity="0.67"/><circle cx="797" cy="527" r="3.5" fill="#fff" opacity="0.83"/><circle cx="1175" cy="540" r="3.5" fill="#fff" opacity="0.84"/><circle cx="734" cy="594" r="2.2" fill="#fff" opacity="0.73"/><circle cx="1305" cy="601" r="1.5" fill="#fff" opacity="0.63"/><circle cx="1187" cy="1121" r="1.5" fill="#fff" opacity="0.86"/><circle cx="1387" cy="1030" r="2.2" fill="#fff" opacity="0.58"/><circle cx="799" cy="558" r="1.2" fill="#fff" opacity="0.58"/><circle cx="1099" cy="563" r="1.5" fill="#fff" opacity="0.99"/><circle cx="1223" cy="1039" r="2.8" fill="#fff" opacity="0.64"/><circle cx="599" cy="1197" r="1.8" fill="#fff" opacity="0.60"/><circle cx="853" cy="420" r="2.8" fill="#fff" opacity="0.93"/><circle cx="897" cy="587" r="1.8" fill="#fff" opacity="0.73"/><circle cx="629" cy="924" r="2.8" fill="#fff" opacity="0.50"/><circle cx="720" cy="1145" r="2.8" fill="#fff" opacity="0.92"/><circle cx="1108" cy="967" r="1.5" fill="#fff" opacity="0.84"/><circle cx="1084" cy="792" r="2.2" fill="#fff" opacity="0.63"/><circle cx="1138" cy="1182" r="1.5" fill="#fff" opacity="0.89"/><circle cx="1149" cy="947" r="1.8" fill="#fff" opacity="0.92"/><circle cx="939" cy="407" r="2.8" fill="#fff" opacity="0.76"/><circle cx="1102" cy="1163" r="2.2" fill="#fff" opacity="0.89"/><circle cx="854" cy="824" r="1.2" fill="#fff" opacity="0.52"/><circle cx="994" cy="532" r="1.5" fill="#fff" opacity="0.76"/><circle cx="592" cy="898" r="1.5" fill="#fff" opacity="0.86"/><circle cx="966" cy="956" r="2.2" fill="#fff" opacity="0.76"/><circle cx="873" cy="1229" r="1.5" fill="#fff" opacity="1.00"/><circle cx="667" cy="845" r="1.2" fill="#fff" opacity="0.86"/><circle cx="1059" cy="954" r="1.8" fill="#fff" opacity="0.64"/><circle cx="864" cy="402" r="2.8" fill="#fff" opacity="0.96"/><circle cx="1072" cy="987" r="1.8" fill="#fff" opacity="0.55"/><circle cx="776" cy="744" r="1.5" fill="#fff" opacity="1.00"/><circle cx="1374" cy="799" r="1.5" fill="#fff" opacity="0.56"/><circle cx="1207" cy="1106" r="1.5" fill="#fff" opacity="0.73"/><circle cx="1011" cy="590" r="1.5" fill="#fff" opacity="0.68"/><circle cx="1081" cy="1115" r="2.8" fill="#fff" opacity="0.73"/><circle cx="768" cy="875" r="1.5" fill="#fff" opacity="0.89"/><circle cx="927" cy="1083" r="1.5" fill="#fff" opacity="0.63"/><circle cx="842" cy="614" r="2.8" fill="#fff" opacity="0.84"/><circle cx="938" cy="1103" r="1.8" fill="#fff" opacity="0.68"/><circle cx="1096" cy="673" r="3.5" fill="#fff" opacity="0.71"/><circle cx="1080" cy="973" r="2.2" fill="#fff" opacity="0.58"/><circle cx="776" cy="731" r="1.2" fill="#fff" opacity="0.91"/><circle cx="1324" cy="1084" r="1.5" fill="#fff" opacity="0.77"/><circle cx="814" cy="905" r="1.0" fill="#fff" opacity="0.60"/><circle cx="566" cy="649" r="1.2" fill="#fff" opacity="0.79"/><circle cx="1277" cy="554" r="3.5" fill="#fff" opacity="0.67"/><circle cx="639" cy="1190" r="1.5" fill="#fff" opacity="0.80"/><circle cx="1126" cy="1255" r="1.2" fill="#fff" opacity="0.83"/><circle cx="1313" cy="1087" r="1.8" fill="#fff" opacity="0.60"/><circle cx="1130" cy="860" r="3.5" fill="#fff" opacity="0.84"/><circle cx="606" cy="495" r="2.8" fill="#fff" opacity="0.62"/><circle cx="627" cy="826" r="1.0" fill="#fff" opacity="0.74"/><circle cx="1324" cy="1010" r="1.5" fill="#fff" opacity="0.75"/><circle cx="991" cy="1154" r="1.0" fill="#fff" opacity="0.58"/><circle cx="792" cy="1006" r="3.5" fill="#fff" opacity="0.83"/><circle cx="1265" cy="722" r="2.8" fill="#fff" opacity="1.00"/><circle cx="1115" cy="550" r="2.2" fill="#fff" opacity="0.82"/><circle cx="526" cy="930" r="2.2" fill="#fff" opacity="0.90"/><circle cx="586" cy="818" r="1.5" fill="#fff" opacity="0.52"/><circle cx="1154" cy="943" r="2.2" fill="#fff" opacity="0.55"/><circle cx="1100" cy="692" r="1.5" fill="#fff" opacity="0.64"/><circle cx="811" cy="613" r="1.0" fill="#fff" opacity="0.91"/><circle cx="767" cy="1123" r="2.8" fill="#fff" opacity="0.67"/><circle cx="1396" cy="1163" r="2.2" fill="#fff" opacity="0.99"/><circle cx="1096" cy="1091" r="2.2" fill="#fff" opacity="0.60"/><circle cx="1149" cy="503" r="1.2" fill="#fff" opacity="0.89"/><circle cx="536" cy="1030" r="2.8" fill="#fff" opacity="0.77"/><circle cx="545" cy="656" r="1.0" fill="#fff" opacity="0.52"/><circle cx="1248" cy="810" r="1.0" fill="#fff" opacity="0.89"/><circle cx="1328" cy="931" r="1.5" fill="#fff" opacity="0.81"/><circle cx="1134" cy="918" r="1.2" fill="#fff" opacity="0.61"/><circle cx="1107" cy="795" r="1.5" fill="#fff" opacity="0.55"/><circle cx="665" cy="423" r="1.2" fill="#fff" opacity="0.96"/><circle cx="1097" cy="716" r="1.5" fill="#fff" opacity="0.89"/><circle cx="1012" cy="618" r="1.8" fill="#fff" opacity="0.59"/><circle cx="531" cy="408" r="1.0" fill="#fff" opacity="0.75"/><circle cx="975" cy="1120" r="2.8" fill="#fff" opacity="0.79"/><circle cx="1336" cy="785" r="1.0" fill="#fff" opacity="0.84"/><circle cx="1040" cy="1269" r="1.5" fill="#fff" opacity="0.74"/><circle cx="875" cy="480" r="3.5" fill="#fff" opacity="0.61"/><circle cx="638" cy="404" r="1.0" fill="#fff" opacity="0.50"/><circle cx="1109" cy="1263" r="1.2" fill="#fff" opacity="0.61"/><circle cx="610" cy="808" r="1.8" fill="#fff" opacity="0.86"/><circle cx="720" cy="1039" r="1.5" fill="#fff" opacity="0.96"/><circle cx="833" cy="1051" r="1.5" fill="#fff" opacity="0.86"/><circle cx="577" cy="946" r="3.5" fill="#fff" opacity="0.73"/><circle cx="1348" cy="615" r="1.0" fill="#fff" opacity="0.86"/><circle cx="510" cy="403" r="1.2" fill="#fff" opacity="0.69"/><circle cx="784" cy="921" r="3.5" fill="#fff" opacity="0.80"/><circle cx="788" cy="1230" r="3.5" fill="#fff" opacity="0.73"/><circle cx="651" cy="1245" r="1.2" fill="#fff" opacity="0.68"/><circle cx="1087" cy="947" r="2.8" fill="#fff" opacity="0.74"/><circle cx="1208" cy="791" r="1.8" fill="#fff" opacity="0.89"/><circle cx="1016" cy="649" r="1.0" fill="#fff" opacity="0.81"/></g><circle cx="1083" cy="815" r="16" fill="url(#glow)"/><circle cx="1134" cy="846" r="17" fill="url(#glow)"/><circle cx="1068" cy="837" r="9" fill="url(#glow)"/><circle cx="1011" cy="722" r="9" fill="url(#glow)"/><circle cx="1100" cy="737" r="8" fill="url(#glow)"/><circle cx="1230" cy="880" r="8" fill="url(#glow)"/><circle cx="890" cy="600" r="7" fill="url(#glow)"/><circle cx="760" cy="980" r="8" fill="url(#glow)"/><circle cx="1195" cy="915" r="7" fill="url(#glow)"/></g><g fill="none" stroke="#8e009c" stroke-width="2.6"><rect x="891.8" y="308.7" width="124" height="124"/><rect x="984.0" y="308.7" width="124" height="124"/><rect x="1004.0" y="308.7" width="124" height="124"/><rect x="564.7" y="418.2" width="124" height="124"/><rect x="672.7" y="418.2" width="124" height="124"/><rect x="782.2" y="418.2" width="124" height="124"/><rect x="891.8" y="418.2" width="124" height="124"/><rect x="984.0" y="418.2" width="124" height="124"/><rect x="1004.0" y="418.2" width="124" height="124"/><rect x="1095.0" y="418.2" width="124" height="124"/><rect x="1204.6" y="418.2" width="124" height="124"/><rect x="564.7" y="527.8" width="124" height="124"/><rect x="674.0" y="527.8" width="124" height="124"/><rect x="783.7" y="527.8" width="124" height="124"/><rect x="893.0" y="527.8" width="124" height="124"/><rect x="984.0" y="527.8" width="124" height="124"/><rect x="1004.0" y="527.8" width="124" height="124"/><rect x="1093.5" y="527.8" width="124" height="124"/><rect x="1203.0" y="527.8" width="124" height="124"/><rect x="455.0" y="637.3" width="124" height="124"/><rect x="564.7" y="637.3" width="124" height="124"/><rect x="674.0" y="637.3" width="124" height="124"/><rect x="783.7" y="637.3" width="124" height="124"/><rect x="893.0" y="637.3" width="124" height="124"/><rect x="984.0" y="637.3" width="124" height="124"/><rect x="1004.0" y="637.3" width="124" height="124"/><rect x="1093.5" y="637.3" width="124" height="124"/><rect x="1203.0" y="637.3" width="124" height="124"/><rect x="1312.6" y="637.3" width="124" height="124"/><rect x="455.0" y="746.9" width="124" height="124"/><rect x="565.0" y="746.9" width="124" height="124"/><rect x="675.0" y="746.9" width="124" height="124"/><rect x="784.0" y="746.9" width="124" height="124"/><rect x="894.0" y="746.9" width="124" height="124"/><rect x="984.0" y="746.9" width="124" height="124"/><rect x="1004.0" y="746.9" width="124" height="124"/><rect x="1093.0" y="746.9" width="124" height="124"/><rect x="1203.0" y="746.9" width="124" height="124"/><rect x="1312.0" y="746.9" width="124" height="124"/><rect x="456.0" y="856.4" width="124" height="124"/><rect x="565.0" y="856.4" width="124" height="124"/><rect x="675.0" y="856.4" width="124" height="124"/><rect x="784.0" y="856.4" width="124" height="124"/><rect x="894.0" y="856.4" width="124" height="124"/><rect x="984.0" y="856.4" width="124" height="124"/><rect x="1004.0" y="856.4" width="124" height="124"/><rect x="1092.0" y="856.4" width="124" height="124"/><rect x="1201.0" y="856.4" width="124" height="124"/><rect x="1311.0" y="856.4" width="124" height="124"/><rect x="546.0" y="958.2" width="124" height="124"/><rect x="566.0" y="966.2" width="124" height="124"/><rect x="655.0" y="958.2" width="124" height="124"/><rect x="675.0" y="966.2" width="124" height="124"/><rect x="765.0" y="958.2" width="124" height="124"/><rect x="785.0" y="966.2" width="124" height="124"/><rect x="875.0" y="958.2" width="124" height="124"/><rect x="895.0" y="966.2" width="124" height="124"/><rect x="984.0" y="958.2" width="124" height="124"/><rect x="1004.0" y="966.2" width="124" height="124"/><rect x="984.0" y="966.2" width="124" height="124"/><rect x="1004.0" y="958.2" width="124" height="124"/><rect x="1092.0" y="958.2" width="124" height="124"/><rect x="1092.0" y="966.2" width="124" height="124"/><rect x="1194.0" y="958.2" width="124" height="124"/><rect x="1202.0" y="966.2" width="124" height="124"/><rect x="1297.0" y="956.2" width="124" height="124"/><rect x="1313.0" y="968.2" width="124" height="124"/><rect x="545.8" y="1068.0" width="124" height="124"/><rect x="655.3" y="1068.0" width="124" height="124"/><rect x="764.9" y="1068.0" width="124" height="124"/><rect x="874.4" y="1068.0" width="124" height="124"/><rect x="984.0" y="1068.0" width="124" height="124"/><rect x="1093.5" y="1068.0" width="124" height="124"/><rect x="1189.0" y="1068.0" width="124" height="124"/><rect x="1205.0" y="1068.0" width="124" height="124"/><rect x="655.3" y="1177.5" width="124" height="124"/><rect x="764.9" y="1177.5" width="124" height="124"/><rect x="874.4" y="1177.5" width="124" height="124"/><rect x="984.0" y="1177.5" width="124" height="124"/></g><g fill="none" stroke="#efb9c2" stroke-width="3" filter="url(#bl2)"><rect x="943.3" y="360.2" width="21" height="21"/><rect x="1035.0" y="360.2" width="21" height="21"/><rect x="1056.0" y="360.2" width="21" height="21"/><rect x="616.2" y="469.7" width="21" height="21"/><rect x="724.2" y="469.7" width="21" height="21"/><rect x="833.7" y="469.7" width="21" height="21"/><rect x="943.3" y="469.7" width="21" height="21"/><rect x="1035.0" y="469.7" width="21" height="21"/><rect x="1056.0" y="469.7" width="21" height="21"/><rect x="1146.5" y="469.7" width="21" height="21"/><rect x="1256.1" y="469.7" width="21" height="21"/><rect x="616.2" y="579.3" width="21" height="21"/><rect x="725.5" y="579.3" width="21" height="21"/><rect x="835.2" y="579.3" width="21" height="21"/><rect x="944.5" y="579.3" width="21" height="21"/><rect x="1035.0" y="579.3" width="21" height="21"/><rect x="1056.0" y="579.3" width="21" height="21"/><rect x="1145.0" y="579.3" width="21" height="21"/><rect x="1254.5" y="579.3" width="21" height="21"/><rect x="506.5" y="688.8" width="21" height="21"/><rect x="616.2" y="688.8" width="21" height="21"/><rect x="725.5" y="688.8" width="21" height="21"/><rect x="835.2" y="688.8" width="21" height="21"/><rect x="944.5" y="688.8" width="21" height="21"/><rect x="1035.0" y="688.8" width="21" height="21"/><rect x="1056.0" y="688.8" width="21" height="21"/><rect x="1145.0" y="688.8" width="21" height="21"/><rect x="1254.5" y="688.8" width="21" height="21"/><rect x="1364.1" y="688.8" width="21" height="21"/><rect x="506.5" y="798.4" width="21" height="21"/><rect x="616.5" y="798.4" width="21" height="21"/><rect x="726.5" y="798.4" width="21" height="21"/><rect x="835.5" y="798.4" width="21" height="21"/><rect x="945.5" y="798.4" width="21" height="21"/><rect x="1035.0" y="798.4" width="21" height="21"/><rect x="1056.0" y="798.4" width="21" height="21"/><rect x="1144.5" y="798.4" width="21" height="21"/><rect x="1254.5" y="798.4" width="21" height="21"/><rect x="1363.5" y="798.4" width="21" height="21"/><rect x="507.5" y="907.9" width="21" height="21"/><rect x="616.5" y="907.9" width="21" height="21"/><rect x="726.5" y="907.9" width="21" height="21"/><rect x="835.5" y="907.9" width="21" height="21"/><rect x="945.5" y="907.9" width="21" height="21"/><rect x="1035.0" y="907.9" width="21" height="21"/><rect x="1056.0" y="907.9" width="21" height="21"/><rect x="1143.5" y="907.9" width="21" height="21"/><rect x="1252.5" y="907.9" width="21" height="21"/><rect x="1362.5" y="907.9" width="21" height="21"/><rect x="597.5" y="1009.7" width="21" height="21"/><rect x="617.5" y="1017.7" width="21" height="21"/><rect x="706.5" y="1009.7" width="21" height="21"/><rect x="726.5" y="1017.7" width="21" height="21"/><rect x="816.5" y="1009.7" width="21" height="21"/><rect x="836.5" y="1017.7" width="21" height="21"/><rect x="926.5" y="1009.7" width="21" height="21"/><rect x="946.5" y="1017.7" width="21" height="21"/><rect x="1035.5" y="1009.7" width="21" height="21"/><rect x="1055.5" y="1017.7" width="21" height="21"/><rect x="1143.5" y="1009.7" width="21" height="21"/><rect x="1143.5" y="1017.7" width="21" height="21"/><rect x="1245.5" y="1009.7" width="21" height="21"/><rect x="1253.5" y="1017.7" width="21" height="21"/><rect x="1249.5" y="1013.7" width="21" height="21"/><rect x="1348.5" y="1007.7" width="21" height="21"/><rect x="1364.5" y="1019.7" width="21" height="21"/><rect x="597.3" y="1119.5" width="21" height="21"/><rect x="706.8" y="1119.5" width="21" height="21"/><rect x="816.4" y="1119.5" width="21" height="21"/><rect x="925.9" y="1119.5" width="21" height="21"/><rect x="1035.5" y="1119.5" width="21" height="21"/><rect x="1145.0" y="1119.5" width="21" height="21"/><rect x="1242.5" y="1119.5" width="21" height="21"/><rect x="1254.5" y="1119.5" width="21" height="21"/><rect x="706.8" y="1229.0" width="21" height="21"/><rect x="816.4" y="1229.0" width="21" height="21"/><rect x="925.9" y="1229.0" width="21" height="21"/><rect x="1035.5" y="1229.0" width="21" height="21"/></g><g stroke="#c29ac4" stroke-width="3.2" fill="none" opacity="0.9"><circle cx="976" cy="833" r="24"/><path d="M976 806 L976 822 M976 844 L976 862 M948 833 L965 833 M987 833 L1004 833"/></g><path d="M971 808 L976 802 L981 808 Z M1001 828 L1007 833 L1001 838 Z" fill="#c29ac4" opacity="0.9"/><rect x="1193.5" y="1067" width="124" height="124" fill="none" stroke="#ff8c00" stroke-width="8.5"/></svg></div><div class="a" style="left:9px;top:295px;width:483px;height:55px;background:#cfd2d6;border-radius:0 0 16px 0;"></div><div class="t" style="left:21.7px;top:308.1px;font-size:31.8px;color:#2a2f35;">LSSTComCam: DP1 r</div><div class="t" style="left:353.7px;top:308.9px;font-size:30.8px;color:#58616b;">FOV:2.9°</div><div class="a" style="left:18px;top:1282px;width:1872px;height:63px;background:#d9dcdf;border:5px solid #c4c7cb;border-radius:18px;"></div><svg style="left:0;top:0" width="3834" height="2010" viewBox="0 0 3834 2010"><path d="M59 1292 L45 1292 Q43 1292 43 1294 L43 1334 Q43 1336 45 1336 L85 1336 Q87 1336 87 1334 L87 1314" fill="none" stroke="#2f343b" stroke-width="5"/><path d="M55 1322 L84 1293 M66 1291 L87.5 1291 L87.5 1312" fill="none" stroke="#2f343b" stroke-width="5"/></svg><div class="a" style="left:129px;top:1288px;width:164px;height:50px;background:#e3effa;border-radius:14px;"></div><div class="t" style="left:146.0px;top:1302.0px;font-size:27.2px;color:#0b4a8b;">EQ-J2000:</div><div class="a" style="left:1564px;top:1290px;width:78px;height:48px;background:#636a73;border-radius:24px;"></div><svg style="left:0;top:0" width="3834" height="2010" viewBox="0 0 3834 2010"><circle cx="1588" cy="1314" r="15" fill="#fff"/></svg><div class="t" style="left:1661.0px;top:1297.2px;font-size:34.0px;color:#2d3238;">Click Lock: off</div><div class="a" style="left:1914px;top:19px;width:1909px;height:1335px;border:3px solid #cbd6e0;border-radius:13px;background:#fafbfd;overflow:hidden;"><div class="a" style="left:-1px;top:0px;width:1904px;height:83px;background:#f0f3f7;"></div><div class="a" style="left:-1px;top:83px;width:1904px;height:3px;background:#d6dde4;"></div><div class="a" style="left:24px;top:0px;width:255px;height:86px;background:#fafbfd;border-left:3px solid #dcdfe3;border-right:3px solid #dcdfe3;"></div><div class="a" style="left:24px;top:0px;width:255px;height:6px;background:#30353d;"></div><div class="a" style="left:452px;top:20px;width:3px;height:47px;background:#d5dbe1;"></div><div class="a" style="left:-1px;top:189px;width:1904px;height:2px;background:#e1e5ea;"></div><div class="a" style="left:1057px;top:96px;width:252px;height:84px;border:2.7px solid #cbd6e0;background:#fafbfd;"></div><div class="a" style="left:1138px;top:96px;width:3px;height:84px;background:#cbd6e0;"></div><div class="a" style="left:1219px;top:96px;width:3px;height:84px;background:#cbd6e0;"></div><div class="a" style="left:1222px;top:99px;width:84px;height:78px;background:#dde7ef;"></div></div><div class="t" style="left:1976.0px;top:49.8px;font-size:33.9px;color:#2d3238;">Active Chart</div><div class="t" style="left:2231.0px;top:50.1px;font-size:33.6px;color:#2d3238;">Details</div><svg style="left:0;top:0" width="3834" height="300" viewBox="0 0 3834 300"><defs><filter id="bl2b"><feGaussianBlur stdDeviation="0.6"/></filter></defs><circle cx="1964" cy="160" r="28" fill="none" stroke="#2f343b" stroke-width="6.3"/><path d="M1948 160 L1980 160 M1964 144.5 L1964 175.5" stroke="#2f343b" stroke-width="6.2"/><path d="M2889 128.5 L2923 128.5 Q2925.5 128.5 2925.5 131.3 Q2925.5 134.3 2923 134.3 L2918.8 134.3 L2918.8 150 Q2920 158 2928 159.6 L2928 166 L2884 166 L2884 159.6 Q2892 158 2893 150 L2893 134.3 L2889 134.3 Q2886.5 134.3 2886.5 131.3 Q2886.5 128.5 2889 128.5 Z" fill="#2f343b"/><path d="M2903 166 L2908.8 166 L2908.8 189 L2906 191.5 L2903 189 Z" fill="#2f343b"/><circle cx="3016" cy="160" r="24.2" fill="none" stroke="#626a74" stroke-width="8.5"/><path d="M3004 160 L3028 160 M3016 148 L3016 172" stroke="#626a74" stroke-width="3.3"/><path d="M3036 178 L3041 176 L3049 184 L3049 192.5 L3042 192.5 L3036 186 Z" fill="#626a74"/><path d="M3064 168.5 L3070.5 162.5 Q3074 159.8 3078 162.3 L3084.3 167.5 L3084.3 139 Q3084.3 133.5 3089.5 133.5 L3091 133.5 Q3092.5 128.5 3097.5 128.5 Q3102.5 128.5 3103.8 133.5 Q3110.5 133 3110.8 138 Q3116.5 137.5 3116.5 143 L3116.5 182 Q3116.5 190 3108.5 190 L3089.5 190 Q3085.5 190 3082.5 187 Z" fill="none" stroke="#626a74" stroke-width="4.4" stroke-linejoin="round"/><path d="M3091.6 137 L3091.6 159.6 M3099.3 133 L3099.3 159.6 M3106.9 137 L3106.9 159.6" stroke="#626a74" stroke-width="4"/><rect x="3151" y="132" width="59" height="56" fill="none" stroke="#111" stroke-width="5" stroke-dasharray="6 4" filter="url(#bl2b)"/><circle cx="3294.8" cy="156.7" r="26.2" fill="none" stroke="#2f343b" stroke-width="9"/><path d="M3315 176 L3320 174 L3331 184.5 L3331 193 L3324 193 L3313.5 182 Z" fill="#2f343b"/><path d="M3368.8 134 Q3368.8 131.4 3371.4 131.4 L3413 131.4 L3425.1 143.5 L3425.1 185 Q3425.1 187.6 3422.5 187.6 L3371.4 187.6 Q3368.8 187.6 3368.8 185 Z" fill="none" stroke="#2f343b" stroke-width="6.8" stroke-linejoin="round"/><rect x="3376" y="139" width="31.6" height="13.8" fill="#2f343b"/><circle cx="3397" cy="170.2" r="10.1" fill="#2f343b"/><path d="M3495.5 188.7 A25 25 0 0 1 3482 144" fill="none" stroke="#2f343b" stroke-width="6.8"/><path d="M3502.5 188.7 A25 25 0 0 0 3497 139" fill="none" stroke="#2f343b" stroke-width="6.8"/><path d="M3485.4 139.3 L3497 127 L3501.7 131.4 L3494 139 L3501.7 146.6 L3497 151 Z" fill="#2f343b"/><path d="M3575 138 L3619 138 L3597 163.5 Z" fill="none" stroke="#2f343b" stroke-width="6.2" stroke-linejoin="round"/><path d="M3591 160 L3603 160 L3603 183 Q3603 185 3601 185 L3593 185 Q3591 185 3591 183 Z" fill="#2f343b"/><path d="M3683.4 139.4 L3686.2 131.9 L3695.8 131.9 L3698.6 139.4 L3704.6 142.9 L3712.5 141.5 L3717.3 149.9 L3712.2 156.0 L3712.2 163.0 L3717.3 169.1 L3712.5 177.5 L3704.6 176.1 L3698.6 179.6 L3695.8 187.1 L3686.2 187.1 L3683.4 179.6 L3677.4 176.1 L3669.5 177.5 L3664.7 169.1 L3669.8 163.0 L3669.8 156.0 L3664.7 149.9 L3669.5 141.5 L3677.4 142.9 Z" fill="none" stroke="#2f343b" stroke-width="6.8" stroke-linejoin="miter"/><circle cx="3691" cy="159.5" r="9.4" fill="none" stroke="#2f343b" stroke-width="6"/><line x1="3760" y1="142" x2="3797" y2="179" stroke="#2f343b" stroke-width="6.5"/><path d="M3752.3 134.2 L3775.7 134.2 L3752.3 157.6 Z M3804.9 186.6 L3781.5 186.6 L3804.9 163.2 Z" fill="#2f343b"/></svg><svg style="left:0;top:0" width="3834" height="300" viewBox="0 0 3834 300"><path d="M3280.5 148.8 L3288.5 148.8 L3288.5 168 L3284.3 168 L3284.3 152.8 L3280.5 152.8 Z" fill="#2f343b"/><path d="M3295.3 148.8 L3307.8 168 M3308 148.8 L3295.5 168" stroke="#2f343b" stroke-width="4.4"/></svg><svg style="left:0;top:0" width="3834" height="2010" viewBox="0 0 3834 2010"><line x1="2155.4" y1="303" x2="2155.4" y2="1173.4" stroke="#444a50" stroke-width="2.7"/><line x1="2154" y1="1172" x2="3579" y2="1172" stroke="#444a50" stroke-width="2.7"/><line x1="2139" y1="305.3" x2="2156" y2="305.3" stroke="#444a50" stroke-width="2.7"/><line x1="2139" y1="419.8" x2="2156" y2="419.8" stroke="#444a50" stroke-width="2.7"/><line x1="2139" y1="534.4" x2="2156" y2="534.4" stroke="#444a50" stroke-width="2.7"/><line x1="2139" y1="648.9" x2="2156" y2="648.9" stroke="#444a50" stroke-width="2.7"/><line x1="2139" y1="763.5" x2="2156" y2="763.5" stroke="#444a50" stroke-width="2.7"/><line x1="2139" y1="878.1" x2="2156" y2="878.1" stroke="#444a50" stroke-width="2.7"/><line x1="2139" y1="992.6" x2="2156" y2="992.6" stroke="#444a50" stroke-width="2.7"/><line x1="2139" y1="1107.2" x2="2156" y2="1107.2" stroke="#444a50" stroke-width="2.7"/><line x1="2473.6" y1="1171" x2="2473.6" y2="1189" stroke="#444a50" stroke-width="2.7"/><line x1="2910.4" y1="1171" x2="2910.4" y2="1189" stroke="#444a50" stroke-width="2.7"/><line x1="3347.3" y1="1171" x2="3347.3" y2="1189" stroke="#444a50" stroke-width="2.7"/><circle cx="2879.2" cy="358.7" r="9" fill="#1f77b4" fill-opacity="0.5"/><circle cx="3018" cy="358.7" r="9" fill="#1f77b4" fill-opacity="0.5"/><circle cx="3039" cy="358.7" r="9" fill="#1f77b4" fill-opacity="0.5"/><circle cx="2399.7" cy="454.5" r="9" fill="#1f77b4" fill-opacity="0.5"/><circle cx="2560" cy="454.5" r="9" fill="#1f77b4" fill-opacity="0.5"/><circle cx="2720" cy="454.5" r="9" fill="#1f77b4" fill-opacity="0.5"/><circle cx="2880" cy="454.5" r="9" fill="#1f77b4" fill-opacity="0.5"/><circle cx="3017" cy="454.5" r="9" fill="#1f77b4" fill-opacity="0.5"/><circle cx="3040" cy="454.5" r="9" fill="#1f77b4" fill-opacity="0.5"/><circle cx="3176.8" cy="454.5" r="9" fill="#1f77b4" fill-opacity="0.5"/><circle cx="3336.9" cy="454.5" r="9" fill="#1f77b4" fill-opacity="0.5"/><circle cx="2399.7" cy="549.9" r="9" fill="#1f77b4" fill-opacity="0.5"/><circle cx="2560" cy="549.9" r="9" fill="#1f77b4" fill-opacity="0.5"/><circle cx="2720.5" cy="549.9" r="9" fill="#1f77b4" fill-opacity="0.5"/><circle cx="2880.5" cy="549.9" r="9" fill="#1f77b4" fill-opacity="0.5"/><circle cx="3016" cy="549.9" r="9" fill="#1f77b4" fill-opacity="0.5"/><circle cx="3041" cy="549.9" r="9" fill="#1f77b4" fill-opacity="0.5"/><circle cx="3176" cy="549.9" r="9" fill="#1f77b4" fill-opacity="0.5"/><circle cx="3336.5" cy="549.9" r="9" fill="#1f77b4" fill-opacity="0.5"/><circle cx="2239.3" cy="645.5" r="9" fill="#1f77b4" fill-opacity="0.5"/><circle cx="2400" cy="645.5" r="9" fill="#1f77b4" fill-opacity="0.5"/><circle cx="2560.6" cy="645.5" r="9" fill="#1f77b4" fill-opacity="0.5"/><circle cx="2721.2" cy="645.5" r="9" fill="#1f77b4" fill-opacity="0.5"/><circle cx="2881.3" cy="645.5" r="9" fill="#1f77b4" fill-opacity="0.5"/><circle cx="3015" cy="645.5" r="9" fill="#1f77b4" fill-opacity="0.5"/><circle cx="3042" cy="645.5" r="9" fill="#1f77b4" fill-opacity="0.5"/><circle cx="3175.5" cy="645.5" r="9" fill="#1f77b4" fill-opacity="0.5"/><circle cx="3336" cy="645.5" r="9" fill="#1f77b4" fill-opacity="0.5"/><circle cx="3496.6" cy="645.5" r="9" fill="#1f77b4" fill-opacity="0.5"/><circle cx="2239.3" cy="741.3" r="9" fill="#1f77b4" fill-opacity="0.5"/><circle cx="2400" cy="741.3" r="9" fill="#1f77b4" fill-opacity="0.5"/><circle cx="2560.7" cy="741.3" r="9" fill="#1f77b4" fill-opacity="0.5"/><circle cx="2721.4" cy="741.3" r="9" fill="#1f77b4" fill-opacity="0.5"/><circle cx="2882" cy="741.3" r="9" fill="#1f77b4" fill-opacity="0.5"/><circle cx="3014" cy="741.3" r="9" fill="#1f77b4" fill-opacity="0.5"/><circle cx="3043" cy="741.3" r="9" fill="#1f77b4" fill-opacity="0.5"/><circle cx="3174.9" cy="741.3" r="9" fill="#1f77b4" fill-opacity="0.5"/><circle cx="3335.6" cy="741.3" r="9" fill="#1f77b4" fill-opacity="0.5"/><circle cx="3496.3" cy="741.3" r="9" fill="#1f77b4" fill-opacity="0.5"/><circle cx="2239" cy="836.7" r="9" fill="#1f77b4" fill-opacity="0.5"/><circle cx="2400" cy="836.7" r="9" fill="#1f77b4" fill-opacity="0.5"/><circle cx="2561" cy="836.7" r="9" fill="#1f77b4" fill-opacity="0.5"/><circle cx="2722" cy="836.7" r="9" fill="#1f77b4" fill-opacity="0.5"/><circle cx="2883" cy="836.7" r="9" fill="#1f77b4" fill-opacity="0.5"/><circle cx="3013" cy="836.7" r="9" fill="#1f77b4" fill-opacity="0.5"/><circle cx="3044" cy="836.7" r="9" fill="#1f77b4" fill-opacity="0.5"/><circle cx="3174" cy="836.7" r="9" fill="#1f77b4" fill-opacity="0.5"/><circle cx="3335" cy="836.7" r="9" fill="#1f77b4" fill-opacity="0.5"/><circle cx="3496" cy="836.7" r="9" fill="#1f77b4" fill-opacity="0.5"/><circle cx="2369.4" cy="925.1" r="9" fill="#1f77b4" fill-opacity="0.5"/><circle cx="2530.4" cy="925.1" r="9" fill="#1f77b4" fill-opacity="0.5"/><circle cx="2691.7" cy="925.1" r="9" fill="#1f77b4" fill-opacity="0.5"/><circle cx="2852.7" cy="925.1" r="9" fill="#1f77b4" fill-opacity="0.5"/><circle cx="3013.5" cy="925.1" r="9" fill="#1f77b4" fill-opacity="0.5"/><circle cx="3174.7" cy="925.1" r="9" fill="#1f77b4" fill-opacity="0.5"/><circle cx="3322.5" cy="925.1" r="9" fill="#1f77b4" fill-opacity="0.5"/><circle cx="3335.9" cy="925.1" r="9" fill="#1f77b4" fill-opacity="0.5"/><circle cx="3483.8" cy="925.1" r="9" fill="#1f77b4" fill-opacity="0.5"/><circle cx="2400" cy="931.8" r="9" fill="#1f77b4" fill-opacity="0.5"/><circle cx="2561" cy="931.8" r="9" fill="#1f77b4" fill-opacity="0.5"/><circle cx="2722.4" cy="931.8" r="9" fill="#1f77b4" fill-opacity="0.5"/><circle cx="2883.6" cy="931.8" r="9" fill="#1f77b4" fill-opacity="0.5"/><circle cx="3012" cy="931.8" r="9" fill="#1f77b4" fill-opacity="0.5"/><circle cx="3044.8" cy="931.8" r="9" fill="#1f77b4" fill-opacity="0.5"/><circle cx="3173.2" cy="931.8" r="9" fill="#1f77b4" fill-opacity="0.5"/><circle cx="3334.6" cy="931.8" r="9" fill="#1f77b4" fill-opacity="0.5"/><circle cx="3495.3" cy="931.8" r="9" fill="#1f77b4" fill-opacity="0.5"/><circle cx="2369" cy="1020.3" r="9" fill="#1f77b4" fill-opacity="0.5"/><circle cx="2530" cy="1020.3" r="9" fill="#1f77b4" fill-opacity="0.5"/><circle cx="2691.7" cy="1020.3" r="9" fill="#1f77b4" fill-opacity="0.5"/><circle cx="2852.7" cy="1020.3" r="9" fill="#1f77b4" fill-opacity="0.5"/><circle cx="3014.5" cy="1020.3" r="9" fill="#1f77b4" fill-opacity="0.5"/><circle cx="3175.7" cy="1020.3" r="9" fill="#1f77b4" fill-opacity="0.5"/><circle cx="3337" cy="1020.3" r="9" fill="#1f77b4" fill-opacity="0.5"/><circle cx="2530" cy="1116.1" r="9" fill="#1f77b4" fill-opacity="0.5"/><circle cx="2691.7" cy="1116.1" r="9" fill="#1f77b4" fill-opacity="0.5"/><circle cx="2852.7" cy="1116.1" r="9" fill="#1f77b4" fill-opacity="0.5"/><circle cx="3014.8" cy="1116.1" r="9" fill="#1f77b4" fill-opacity="0.5"/><circle cx="3322" cy="1019.8" r="11.8" fill="#ffa000"/></svg><div class="t" style="left:-1868.0px;width:4000px;text-align:right;top:287.1px;font-size:37.5px;color:#505a66;letter-spacing:1.3px;-webkit-text-stroke:0.5px #505a66;">24.2</div><div class="t" style="left:-1948.2px;width:4000px;text-align:right;top:287.1px;font-size:37.5px;color:#505a66;transform:scaleX(1.15);transform-origin:right;-webkit-text-stroke:0.5px #505a66;">−</div><div class="t" style="left:-1868.0px;width:4000px;text-align:right;top:401.6px;font-size:37.5px;color:#505a66;letter-spacing:1.3px;-webkit-text-stroke:0.5px #505a66;">24.4</div><div class="t" style="left:-1948.2px;width:4000px;text-align:right;top:401.6px;font-size:37.5px;color:#505a66;transform:scaleX(1.15);transform-origin:right;-webkit-text-stroke:0.5px #505a66;">−</div><div class="t" style="left:-1868.0px;width:4000px;text-align:right;top:516.2px;font-size:37.5px;color:#505a66;letter-spacing:1.3px;-webkit-text-stroke:0.5px #505a66;">24.6</div><div class="t" style="left:-1948.2px;width:4000px;text-align:right;top:516.2px;font-size:37.5px;color:#505a66;transform:scaleX(1.15);transform-origin:right;-webkit-text-stroke:0.5px #505a66;">−</div><div class="t" style="left:-1868.0px;width:4000px;text-align:right;top:630.7px;font-size:37.5px;color:#505a66;letter-spacing:1.3px;-webkit-text-stroke:0.5px #505a66;">24.8</div><div class="t" style="left:-1948.2px;width:4000px;text-align:right;top:630.7px;font-size:37.5px;color:#505a66;transform:scaleX(1.15);transform-origin:right;-webkit-text-stroke:0.5px #505a66;">−</div><div class="t" style="left:-1868.0px;width:4000px;text-align:right;top:745.3px;font-size:37.5px;color:#505a66;letter-spacing:1.3px;-webkit-text-stroke:0.5px #505a66;">25</div><div class="t" style="left:-1914.3px;width:4000px;text-align:right;top:745.3px;font-size:37.5px;color:#505a66;transform:scaleX(1.15);transform-origin:right;-webkit-text-stroke:0.5px #505a66;">−</div><div class="t" style="left:-1868.0px;width:4000px;text-align:right;top:859.9px;font-size:37.5px;color:#505a66;letter-spacing:1.3px;-webkit-text-stroke:0.5px #505a66;">25.2</div><div class="t" style="left:-1948.2px;width:4000px;text-align:right;top:859.9px;font-size:37.5px;color:#505a66;transform:scaleX(1.15);transform-origin:right;-webkit-text-stroke:0.5px #505a66;">−</div><div class="t" style="left:-1868.0px;width:4000px;text-align:right;top:974.4px;font-size:37.5px;color:#505a66;letter-spacing:1.3px;-webkit-text-stroke:0.5px #505a66;">25.4</div><div class="t" style="left:-1948.2px;width:4000px;text-align:right;top:974.4px;font-size:37.5px;color:#505a66;transform:scaleX(1.15);transform-origin:right;-webkit-text-stroke:0.5px #505a66;">−</div><div class="t" style="left:-1868.0px;width:4000px;text-align:right;top:1089.0px;font-size:37.5px;color:#505a66;letter-spacing:1.3px;-webkit-text-stroke:0.5px #505a66;">25.6</div><div class="t" style="left:-1948.2px;width:4000px;text-align:right;top:1089.0px;font-size:37.5px;color:#505a66;transform:scaleX(1.15);transform-origin:right;-webkit-text-stroke:0.5px #505a66;">−</div><div class="t" style="left:474.4px;width:4000px;text-align:center;top:1201.8px;font-size:37.5px;color:#505a66;letter-spacing:1.5px;-webkit-text-stroke:0.5px #505a66;">95.5</div><div class="t" style="left:911.2px;width:4000px;text-align:center;top:1201.8px;font-size:37.5px;color:#505a66;letter-spacing:1.5px;-webkit-text-stroke:0.5px #505a66;">95</div><div class="t" style="left:1348.1px;width:4000px;text-align:center;top:1201.8px;font-size:37.5px;color:#505a66;letter-spacing:1.5px;-webkit-text-stroke:0.5px #505a66;">94.5</div><div class="t" style="left:867.0px;width:4000px;text-align:center;top:1279.3px;font-size:37.5px;color:#505a66;letter-spacing:1.9px;-webkit-text-stroke:0.4px #505a66;">s_ra (deg)</div><div class="t" style="left:-29px;width:4000px;text-align:center;top:718.8px;font-size:37.5px;color:#505a66;letter-spacing:1.9px;-webkit-text-stroke:0.4px #505a66;transform:rotate(-90deg);transform-origin:2000px 19px;">s_dec (deg)</div><div class="a" style="left:6px;top:1366px;width:3817px;height:643px;border:3px solid #cbd6e0;border-radius:13px;background:#f0f3f7;overflow:hidden;"><div class="a" style="left:0px;top:105px;width:3811px;height:532px;background:#fafbfd;"></div><div class="a" style="left:0px;top:105px;width:3811px;height:3px;background:#cdd7e1;"></div><div class="a" style="left:0px;top:327px;width:3768px;height:60px;background:#fde2c4;"></div><div class="a" style="left:0px;top:325px;width:3811px;height:3px;background:#cdd7e1;"></div><div class="a" style="left:0px;top:385px;width:3768px;height:3px;background:#cdd7e1;"></div><div class="a" style="left:0px;top:445px;width:3768px;height:3px;background:#cdd7e1;"></div><div class="a" style="left:0px;top:505px;width:3768px;height:3px;background:#cdd7e1;"></div><div class="a" style="left:0px;top:565px;width:3768px;height:3px;background:#cdd7e1;"></div><div class="a" style="left:72px;top:108px;width:6px;height:478px;background:#cdd7e1;"></div><div class="a" style="left:419.7px;top:108px;width:2.6000000000000227px;height:478px;background:#cdd7e1;"></div><div class="a" style="left:829.7px;top:108px;width:2.599999999999909px;height:478px;background:#cdd7e1;"></div><div class="a" style="left:1049.7px;top:108px;width:2.599999999999909px;height:478px;background:#cdd7e1;"></div><div class="a" style="left:1275.2px;top:108px;width:2.599999999999909px;height:478px;background:#cdd7e1;"></div><div class="a" style="left:1436.7px;top:108px;width:2.599999999999909px;height:478px;background:#cdd7e1;"></div><div class="a" style="left:1615.7px;top:108px;width:2.599999999999909px;height:478px;background:#cdd7e1;"></div><div class="a" style="left:1841.7px;top:108px;width:2.599999999999909px;height:478px;background:#cdd7e1;"></div><div class="a" style="left:2067.7px;top:108px;width:2.600000000000364px;height:478px;background:#cdd7e1;"></div><div class="a" style="left:2401.2px;top:108px;width:2.600000000000364px;height:478px;background:#cdd7e1;"></div><div class="a" style="left:2777.2px;top:108px;width:2.600000000000364px;height:478px;background:#cdd7e1;"></div><div class="a" style="left:3146.7px;top:108px;width:2.600000000000364px;height:478px;background:#cdd7e1;"></div><div class="a" style="left:3761.2px;top:108px;width:2.600000000000364px;height:478px;background:#cdd7e1;"></div><div class="a" style="left:3768px;top:327px;width:40px;height:259px;background:#fafbfd;"></div><div class="a" style="left:3767px;top:327px;width:2.5px;height:259px;background:#cdd7e1;"></div><div class="a" style="left:3780px;top:340px;width:19px;height:66px;background:#cbd5df;border-radius:10px;"></div><div class="a" style="left:0px;top:586px;width:3811px;height:51px;background:#fafbfd;box-shadow:0 -3px 4px rgba(0,0,0,0.06);"></div><div class="a" style="left:18px;top:598px;width:1763px;height:21px;background:#cbd5df;border-radius:11px;"></div></div><div class="a" style="left:24.0px;top:1484.0px;width:41.0px;height:41.0px;border:2.7px solid #cdd7e1;border-radius:9px;background:#fafbfd;"></div><div class="clip" style="left:0;top:1696px;width:87px;height:259px;"><div class="a" style="left:0;top:-1696px;width:100px;height:2010px;"><div class="a" style="left:24.0px;top:1705.5px;width:41.0px;height:41.0px;border:2.7px solid #cdd7e1;border-radius:9px;background:#fafbfd;"></div><div class="a" style="left:24.0px;top:1765.5px;width:41.0px;height:41.0px;border:2.7px solid #cdd7e1;border-radius:9px;background:#fafbfd;"></div><div class="a" style="left:24.0px;top:1825.5px;width:41.0px;height:41.0px;border:2.7px solid #cdd7e1;border-radius:9px;background:#fafbfd;"></div><div class="a" style="left:24.0px;top:1885.5px;width:41.0px;height:41.0px;border:2.7px solid #cdd7e1;border-radius:9px;background:#fafbfd;"></div><div class="a" style="left:24.0px;top:1945.5px;width:41.0px;height:41.0px;border:2.7px solid #cdd7e1;border-radius:9px;background:#fafbfd;"></div></div></div><div class="t" style="left:-1741.5px;width:4000px;text-align:center;top:1489.9px;font-size:35px;color:#1f2429;">dataproduct_type</div><div class="t" style="left:-1741.5px;width:4000px;text-align:center;top:1576.4px;font-size:35px;color:#56606b;">char</div><div class="a" style="left:97px;top:1617px;width:323px;height:73px;border:2.7px solid #cdd7e1;border-radius:17px;background:#fafbfd;box-shadow:0 1px 3px rgba(0,0,0,0.06);"></div><svg style="left:0;top:0" width="1" height="1"><path d="M382 1648.5 L399.5 1648.5 L390.75 1658 Z" fill="#3a4047"/></svg><div class="t" style="left:-1365.0px;width:4000px;text-align:center;top:1489.9px;font-size:35px;color:#1f2429;">dataproduct_subtype</div><div class="t" style="left:-1365.0px;width:4000px;text-align:center;top:1576.4px;font-size:35px;color:#56606b;">char</div><div class="a" style="left:440px;top:1617px;width:390px;height:73px;border:2.7px solid #cdd7e1;border-radius:17px;background:#fafbfd;box-shadow:0 1px 3px rgba(0,0,0,0.06);"></div><svg style="left:0;top:0" width="1" height="1"><path d="M792 1648.5 L809.5 1648.5 L800.75 1658 Z" fill="#3a4047"/></svg><div class="t" style="left:-1050.0px;width:4000px;text-align:center;top:1489.9px;font-size:35px;color:#1f2429;">calib_level</div><div class="t" style="left:-1050.0px;width:4000px;text-align:center;top:1576.4px;font-size:35px;color:#56606b;">integer</div><div class="a" style="left:850px;top:1617px;width:200px;height:73px;border:2.7px solid #cdd7e1;border-radius:17px;background:#fafbfd;box-shadow:0 1px 3px rgba(0,0,0,0.06);"></div><svg style="left:0;top:0" width="1" height="1"><path d="M1012 1648.5 L1029.5 1648.5 L1020.75 1658 Z" fill="#3a4047"/></svg><div class="t" style="left:-827.2px;width:4000px;text-align:center;top:1489.9px;font-size:35px;color:#1f2429;">lsst_band</div><div class="t" style="left:-827.2px;width:4000px;text-align:center;top:1576.4px;font-size:35px;color:#56606b;">char</div><div class="a" style="left:1070px;top:1617px;width:205.5px;height:73px;border:2.7px solid #cdd7e1;border-radius:17px;background:#fafbfd;box-shadow:0 1px 3px rgba(0,0,0,0.06);"></div><svg style="left:0;top:0" width="1" height="1"><path d="M1237.5 1648.5 L1255.0 1648.5 L1246.25 1658 Z" fill="#3a4047"/></svg><div class="t" style="left:-633.8px;width:4000px;text-align:center;top:1489.9px;font-size:35px;color:#1f2429;">em_min</div><div class="t" style="left:-633.8px;width:4000px;text-align:center;top:1534.4px;font-size:35px;color:#56606b;">(m)</div><div class="t" style="left:-633.8px;width:4000px;text-align:center;top:1576.4px;font-size:35px;color:#56606b;">double</div><div class="a" style="left:1295.5px;top:1617px;width:141.5px;height:73px;border:2.7px solid #cdd7e1;border-radius:17px;background:#fafbfd;box-shadow:0 1px 3px rgba(0,0,0,0.06);"></div><div class="t" style="left:-463.5px;width:4000px;text-align:center;top:1489.9px;font-size:35px;color:#1f2429;">em_max</div><div class="t" style="left:-463.5px;width:4000px;text-align:center;top:1534.4px;font-size:35px;color:#56606b;">(m)</div><div class="t" style="left:-463.5px;width:4000px;text-align:center;top:1576.4px;font-size:35px;color:#56606b;">double</div><div class="a" style="left:1457px;top:1617px;width:159px;height:73px;border:2.7px solid #cdd7e1;border-radius:17px;background:#fafbfd;box-shadow:0 1px 3px rgba(0,0,0,0.06);"></div><div class="t" style="left:-261.0px;width:4000px;text-align:center;top:1489.9px;font-size:35px;color:#1f2429;">lsst_tract</div><div class="t" style="left:-261.0px;width:4000px;text-align:center;top:1576.4px;font-size:35px;color:#56606b;">long</div><div class="a" style="left:1636px;top:1617px;width:206px;height:73px;border:2.7px solid #cdd7e1;border-radius:17px;background:#fafbfd;box-shadow:0 1px 3px rgba(0,0,0,0.06);"></div><svg style="left:0;top:0" width="1" height="1"><path d="M1804 1648.5 L1821.5 1648.5 L1812.75 1658 Z" fill="#3a4047"/></svg><div class="t" style="left:-35.0px;width:4000px;text-align:center;top:1489.9px;font-size:35px;color:#1f2429;">lsst_patch</div><div class="t" style="left:-35.0px;width:4000px;text-align:center;top:1576.4px;font-size:35px;color:#56606b;">long</div><div class="a" style="left:1862px;top:1617px;width:206px;height:73px;border:2.7px solid #cdd7e1;border-radius:17px;background:#fafbfd;box-shadow:0 1px 3px rgba(0,0,0,0.06);"></div><div class="t" style="left:244.8px;width:4000px;text-align:center;top:1489.9px;font-size:35px;color:#1f2429;">s_ra</div><div class="t" style="left:244.8px;width:4000px;text-align:center;top:1534.4px;font-size:35px;color:#56606b;">(deg)</div><div class="t" style="left:244.8px;width:4000px;text-align:center;top:1576.4px;font-size:35px;color:#56606b;">double</div><div class="a" style="left:2088px;top:1617px;width:313.5px;height:73px;border:2.7px solid #cdd7e1;border-radius:17px;background:#fafbfd;box-shadow:0 1px 3px rgba(0,0,0,0.06);"></div><div class="t" style="left:599.5px;width:4000px;text-align:center;top:1489.9px;font-size:35px;color:#1f2429;">s_dec</div><div class="t" style="left:599.5px;width:4000px;text-align:center;top:1534.4px;font-size:35px;color:#56606b;">(deg)</div><div class="t" style="left:599.5px;width:4000px;text-align:center;top:1576.4px;font-size:35px;color:#56606b;">double</div><div class="a" style="left:2421.5px;top:1617px;width:356.0px;height:73px;border:2.7px solid #cdd7e1;border-radius:17px;background:#fafbfd;box-shadow:0 1px 3px rgba(0,0,0,0.06);"></div><div class="t" style="left:972.2px;width:4000px;text-align:center;top:1489.9px;font-size:35px;color:#1f2429;">s_fov</div><div class="t" style="left:972.2px;width:4000px;text-align:center;top:1534.4px;font-size:35px;color:#56606b;">(deg)</div><div class="t" style="left:972.2px;width:4000px;text-align:center;top:1576.4px;font-size:35px;color:#56606b;">double</div><div class="a" style="left:2797.5px;top:1617px;width:349.5px;height:73px;border:2.7px solid #cdd7e1;border-radius:17px;background:#fafbfd;box-shadow:0 1px 3px rgba(0,0,0,0.06);"></div><div class="t" style="left:1464.2px;width:4000px;text-align:center;top:1489.9px;font-size:35px;color:#1f2429;">s_region</div><div class="t" style="left:1464.2px;width:4000px;text-align:center;top:1576.4px;font-size:35px;color:#56606b;">char</div><div class="a" style="left:3167px;top:1617px;width:594.5px;height:73px;border:2.7px solid #cdd7e1;border-radius:17px;background:#fafbfd;box-shadow:0 1px 3px rgba(0,0,0,0.06);"></div><div class="clip" style="left:3773px;top:1610px;width:44px;height:84px;"><div class="a" style="left:7px;top:7px;width:60px;height:73px;border:2.7px solid #cdd7e1;border-radius:17px;background:#fafbfd;"></div></div><div class="clip" style="left:87px;top:1696px;width:3690px;height:259px;"><div class="a" style="left:-87px;top:-1696px;width:3834px;height:2010px;"><div class="t" style="left:92.0px;top:1709.6px;font-size:33px;color:#2b3036;">image</div><div class="t" style="left:435.0px;top:1709.6px;font-size:33px;color:#2b3036;">lsst.deep_coadd</div><div class="t" style="left:845.0px;top:1709.6px;font-size:33px;color:#2b3036;">3</div><div class="t" style="left:1065.0px;top:1709.6px;font-size:33px;color:#2b3036;">r</div><div class="t" style="left:1290.5px;top:1710.2px;font-size:32.2px;color:#2b3036;">5.51e-7</div><div class="t" style="left:1452.0px;top:1710.2px;font-size:32.2px;color:#2b3036;">6.891e-7</div><div class="t" style="left:1631.0px;top:1710.2px;font-size:32.2px;color:#2b3036;">5305</div><div class="t" style="left:1857.0px;top:1710.2px;font-size:32.2px;color:#2b3036;">80</div><div class="t" style="left:2083.0px;top:1710.2px;font-size:32.2px;color:#2b3036;">94.52909421517128</div><div class="t" style="left:2416.5px;top:1710.2px;font-size:32.2px;color:#2b3036;">-25.447383701598568</div><div class="t" style="left:2792.5px;top:1710.2px;font-size:32.2px;color:#2b3036;">0.2670918848097167</div><div class="t" style="left:3162.0px;top:1711.3px;font-size:30.9px;color:#2b3036;">POLYGON ICRS 94.425110 -25.542361 94.</div><div class="t" style="left:92.0px;top:1769.6px;font-size:33px;color:#2b3036;">image</div><div class="t" style="left:435.0px;top:1769.6px;font-size:33px;color:#2b3036;">lsst.deep_coadd</div><div class="t" style="left:845.0px;top:1769.6px;font-size:33px;color:#2b3036;">3</div><div class="t" style="left:1065.0px;top:1769.6px;font-size:33px;color:#2b3036;">r</div><div class="t" style="left:1290.5px;top:1770.2px;font-size:32.2px;color:#2b3036;">5.51e-7</div><div class="t" style="left:1452.0px;top:1770.2px;font-size:32.2px;color:#2b3036;">6.891e-7</div><div class="t" style="left:1631.0px;top:1770.2px;font-size:32.2px;color:#2b3036;">5305</div><div class="t" style="left:1857.0px;top:1770.2px;font-size:32.2px;color:#2b3036;">90</div><div class="t" style="left:2083.0px;top:1770.2px;font-size:32.2px;color:#2b3036;">94.52792192789309</div><div class="t" style="left:2416.5px;top:1770.2px;font-size:32.2px;color:#2b3036;">-25.280757955743802</div><div class="t" style="left:2792.5px;top:1770.2px;font-size:32.2px;color:#2b3036;">0.26708298508582046</div><div class="t" style="left:3162.0px;top:1771.3px;font-size:30.9px;color:#2b3036;">POLYGON ICRS 94.424084 -25.375725 94.</div><div class="t" style="left:92.0px;top:1829.6px;font-size:33px;color:#2b3036;">image</div><div class="t" style="left:435.0px;top:1829.6px;font-size:33px;color:#2b3036;">lsst.deep_coadd</div><div class="t" style="left:845.0px;top:1829.6px;font-size:33px;color:#2b3036;">3</div><div class="t" style="left:1065.0px;top:1829.6px;font-size:33px;color:#2b3036;">r</div><div class="t" style="left:1290.5px;top:1830.2px;font-size:32.2px;color:#2b3036;">5.51e-7</div><div class="t" style="left:1452.0px;top:1830.2px;font-size:32.2px;color:#2b3036;">6.891e-7</div><div class="t" style="left:1631.0px;top:1830.2px;font-size:32.2px;color:#2b3036;">5305</div><div class="t" style="left:1857.0px;top:1830.2px;font-size:32.2px;color:#2b3036;">91</div><div class="t" style="left:2083.0px;top:1830.2px;font-size:32.2px;color:#2b3036;">94.34364583202105</div><div class="t" style="left:2416.5px;top:1830.2px;font-size:32.2px;color:#2b3036;">-25.28167353214689</div><div class="t" style="left:2792.5px;top:1830.2px;font-size:32.2px;color:#2b3036;">0.2670918835893986</div><div class="t" style="left:3162.0px;top:1831.3px;font-size:30.9px;color:#2b3036;">POLYGON ICRS 94.239651 -25.376514 94.</div><div class="t" style="left:92.0px;top:1889.6px;font-size:33px;color:#2b3036;">image</div><div class="t" style="left:435.0px;top:1889.6px;font-size:33px;color:#2b3036;">lsst.deep_coadd</div><div class="t" style="left:845.0px;top:1889.6px;font-size:33px;color:#2b3036;">3</div><div class="t" style="left:1065.0px;top:1889.6px;font-size:33px;color:#2b3036;">r</div><div class="t" style="left:1290.5px;top:1890.2px;font-size:32.2px;color:#2b3036;">5.51e-7</div><div class="t" style="left:1452.0px;top:1890.2px;font-size:32.2px;color:#2b3036;">6.891e-7</div><div class="t" style="left:1631.0px;top:1890.2px;font-size:32.2px;color:#2b3036;">5306</div><div class="t" style="left:1857.0px;top:1890.2px;font-size:32.2px;color:#2b3036;">74</div><div class="t" style="left:2083.0px;top:1890.2px;font-size:32.2px;color:#2b3036;">95.43484919047566</div><div class="t" style="left:2416.5px;top:1890.2px;font-size:32.2px;color:#2b3036;">-25.61634322699669</div><div class="t" style="left:2792.5px;top:1890.2px;font-size:32.2px;color:#2b3036;">0.267119991345244</div><div class="t" style="left:3162.0px;top:1891.3px;font-size:30.9px;color:#2b3036;">POLYGON ICRS 95.330103 -25.710811 95.</div><div class="t" style="left:92.0px;top:1946.6px;font-size:33px;color:#2b3036;">image</div><div class="t" style="left:435.0px;top:1946.6px;font-size:33px;color:#2b3036;">lsst.deep_coadd</div><div class="t" style="left:845.0px;top:1946.6px;font-size:33px;color:#2b3036;">3</div><div class="t" style="left:1065.0px;top:1946.6px;font-size:33px;color:#2b3036;">r</div><div class="t" style="left:1290.5px;top:1947.2px;font-size:32.2px;color:#2b3036;">5.51e-7</div><div class="t" style="left:1452.0px;top:1947.2px;font-size:32.2px;color:#2b3036;">6.891e-7</div><div class="t" style="left:1631.0px;top:1947.2px;font-size:32.2px;color:#2b3036;">5306</div><div class="t" style="left:1857.0px;top:1947.2px;font-size:32.2px;color:#2b3036;">75</div><div class="t" style="left:2083.0px;top:1947.2px;font-size:32.2px;color:#2b3036;">95.25200273906377</div><div class="t" style="left:2416.5px;top:1947.2px;font-size:32.2px;color:#2b3036;">-25.61634322699669</div><div class="t" style="left:2792.5px;top:1947.2px;font-size:32.2px;color:#2b3036;">0.26711989915342157</div><div class="t" style="left:3162.0px;top:1948.3px;font-size:30.9px;color:#2b3036;">POLYGON ICRS 95.147190 -25.710879 95.</div></div></div><div class="a" style="left:15px;top:1373px;width:48px;height:48px;background:#e4eef8;border-radius:11px;"></div><div class="a" style="left:24px;top:1382px;width:30px;height:30px;background:#96009b;border-radius:7px;"></div><div class="t" style="left:70.0px;top:1380.2px;font-size:34.0px;color:#515b66;">ivoa.ObsCore - data-int</div><svg style="left:0;top:0" width="1" height="1"><path d="M436 1387 L457 1408 M457 1387 L436 1408" stroke="#515b66" stroke-width="3"/></svg><svg style="left:0;top:0" width="3834" height="2010" viewBox="0 0 3834 2010"><rect x="1444.5" y="1406.6" width="5.6" height="32" fill="#2f343b"/><path d="M1476 1408 L1459.5 1422.5 L1476 1437 M1549.5 1408 L1533 1422.5 L1549.5 1437 M1793.5 1408 L1810 1422.5 L1793.5 1437 M1866.5 1408 L1883 1422.5 L1866.5 1437" fill="none" stroke="#2f343b" stroke-width="6"/><rect x="1892.7" y="1406.6" width="5.6" height="32" fill="#2f343b"/></svg><div class="a" style="left:1584px;top:1386px;width:106px;height:71px;border:2.7px solid #cbd6e0;border-radius:20px;background:#fafbfd;box-shadow:0 1px 3px rgba(0,0,0,0.08);"></div><div class="t" style="left:1606.0px;top:1406.1px;font-size:33px;color:#2b3036;">1</div><div class="t" style="left:1705.6px;top:1406.9px;font-size:32px;color:#56606b;">of 1</div><div class="t" style="left:1923.0px;top:1406.9px;font-size:32px;color:#56606b;">(1 - 79 of 79)</div><svg style="left:0;top:0" width="3834" height="2010" viewBox="0 0 3834 2010"><path d="M29 1635 L61 1635 L45 1653 Z" fill="none" stroke="#2f343b" stroke-width="5.5" stroke-linejoin="round"/><path d="M40.5 1650 L49.5 1650 L49.5 1667 Q49.5 1669.7 47 1669.7 L43 1669.7 Q40.5 1669.7 40.5 1667 Z" fill="#2f343b"/><path d="M3085 1447.7 L3131 1447.7 Q3134.7 1448 3134.7 1455 L3085 1455 Z" fill="#2f343b"/><rect x="3102" y="1438" width="10.7" height="10" fill="#2f343b"/><path d="M3097.5 1433 L3131 1433 Q3130 1439.4 3125 1439.4 L3097.5 1439.4 Z" fill="#2f343b"/><path d="M3101 1436 A16 16 0 0 1 3100 1404" fill="none" stroke="#2f343b" stroke-width="7"/><g transform="rotate(-22 3116 1403)"><rect x="3109" y="1389" width="13" height="29" fill="none" stroke="#2f343b" stroke-width="5"/></g><circle cx="3103" cy="1407" r="6" fill="none" stroke="#2f343b" stroke-width="5"/><path d="M3056.5 1450 Q3056 1447 3059 1447 L3084 1447 Q3087 1447 3086 1450 L3073 1464.5 Q3071.7 1466.6 3070 1464.5 Z" fill="#2f343b"/><path d="M3187.5 1400 L3230.5 1400 L3209 1424 Z" fill="none" stroke="#2f343b" stroke-width="6" stroke-linejoin="round"/><path d="M3202.7 1421 L3215 1421 L3215 1444.5 Q3215 1446.7 3213 1446.7 L3204.7 1446.7 Q3202.7 1446.7 3202.7 1444.5 Z" fill="#2f343b"/><path d="M3273 1396.7 L3314 1396.7 L3314 1405.7 L3298 1405.7 L3298 1444 L3289 1444 L3289 1405.7 L3273 1405.7 Z M3304.4 1412.3 L3333 1412.3 L3333 1422 L3323.7 1422 L3323.7 1444 L3314 1444 L3314 1422 L3304.4 1422 Z" fill="#2f343b"/><path d="M3372.9 1396 Q3372.9 1393.9 3375 1393.9 L3416.5 1393.9 L3428.6 1406 L3428.6 1448 Q3428.6 1450 3426.5 1450 L3375 1450 Q3372.9 1450 3372.9 1448 Z" fill="none" stroke="#2f343b" stroke-width="6.8" stroke-linejoin="round"/><rect x="3380" y="1401" width="31.4" height="13.8" fill="#2f343b"/><circle cx="3401" cy="1432.5" r="10.3" fill="#2f343b"/><rect x="3472.7" y="1392.2" width="21.2" height="56.6" rx="4" fill="none" stroke="#2f343b" stroke-width="4.8"/><circle cx="3519.5" cy="1423.4" r="18" fill="none" stroke="#2f343b" stroke-width="3.5"/><path d="M3509.7 1423.4 L3529.3 1423.4 M3519.5 1413.6 L3519.5 1433.2" stroke="#2f343b" stroke-width="3.5"/><circle cx="3593" cy="1421.6" r="31.6" fill="none" stroke="#2f343b" stroke-width="6.6"/><rect x="3589" y="1404.5" width="7.4" height="6.8" fill="#2f343b"/><rect x="3589" y="1419" width="7.4" height="20.3" fill="#2f343b"/><path d="M3683.3 1401.6 L3686.1 1393.9 L3695.9 1393.9 L3698.7 1401.6 L3704.8 1405.1 L3712.9 1403.7 L3717.8 1412.2 L3712.5 1418.5 L3712.5 1425.5 L3717.8 1431.8 L3712.9 1440.3 L3704.8 1438.9 L3698.7 1442.4 L3695.9 1450.1 L3686.1 1450.1 L3683.3 1442.4 L3677.2 1438.9 L3669.1 1440.3 L3664.2 1431.8 L3669.5 1425.5 L3669.5 1418.5 L3664.2 1412.2 L3669.1 1403.7 L3677.2 1405.1 Z" fill="none" stroke="#2f343b" stroke-width="6.8" stroke-linejoin="miter"/><circle cx="3691" cy="1422" r="9.4" fill="none" stroke="#2f343b" stroke-width="6"/><line x1="3760" y1="1404" x2="3797" y2="1441" stroke="#2f343b" stroke-width="6.5"/><path d="M3752.2 1396.2 L3775.6 1396.2 L3752.2 1419.6 Z M3804.9 1448.9 L3781.5 1448.9 L3804.9 1425.5 Z" fill="#2f343b"/></svg>
</body></html>
